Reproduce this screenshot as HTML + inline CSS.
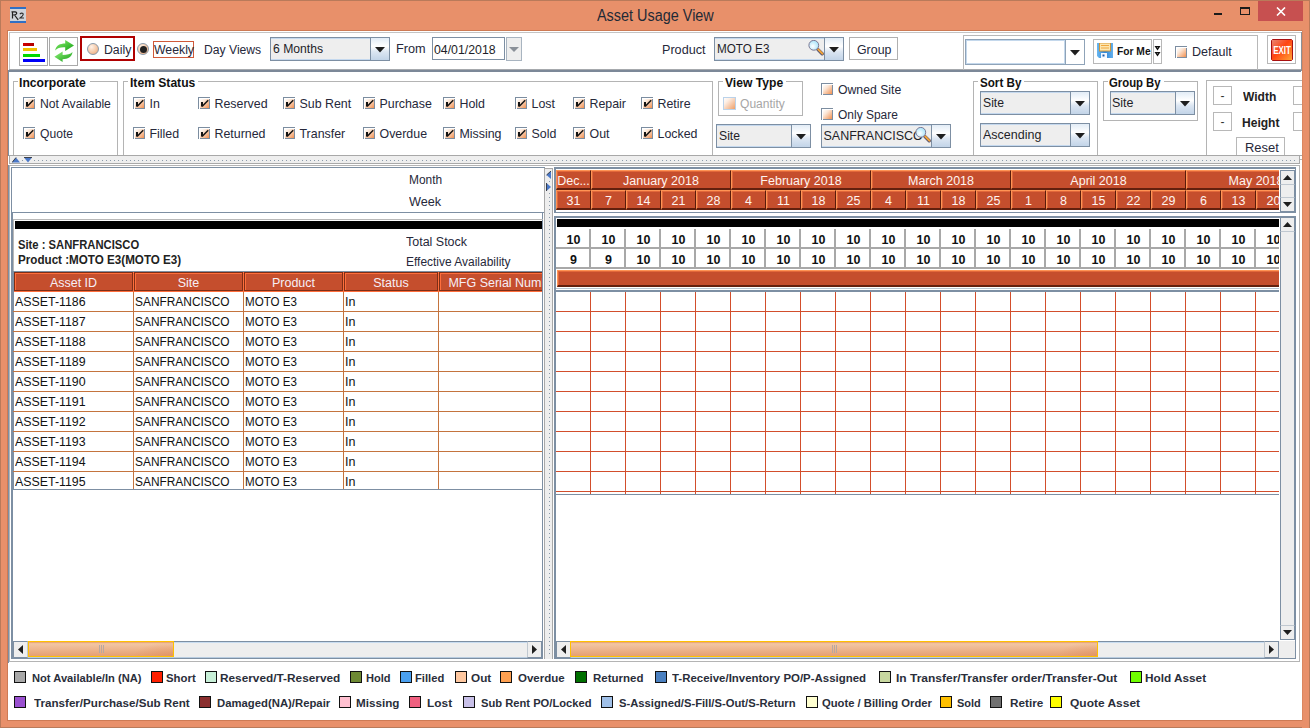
<!DOCTYPE html>
<html><head><meta charset="utf-8"><title>Asset Usage View</title>
<style>
html,body{margin:0;padding:0;}
body{width:1310px;height:728px;position:relative;overflow:hidden;font-family:"Liberation Sans",sans-serif;background:#E8906A;}
body div, body svg{position:absolute;}
</style></head><body>
<div style="left:0px;top:0px;width:1310px;height:728px;background:#E8906A"></div>
<div style="left:0px;top:0px;width:1310px;height:1px;background:#B97A5A"></div>
<div style="left:0px;top:0px;width:1px;height:728px;background:#B97A5A"></div>
<div style="left:1309px;top:0px;width:1px;height:728px;background:#B97A5A"></div>
<div style="left:0px;top:727px;width:1310px;height:1px;background:#B97A5A"></div>
<svg style="left:10px;top:7px" width="16" height="16" viewBox="0 0 16 16"><rect x="0" y="0" width="16" height="16" fill="#CFD3D9"/><rect x="0" y="0" width="16" height="2" fill="#2F6FC4"/><rect x="0" y="14" width="16" height="2" fill="#2F6FC4"/><path d="M2.5 4.5 L2.5 11.5 M1.5 4.8 L5 4.8 Q7 5 6.6 6.8 Q6 8 3 8 M4.5 8 L8.2 12.8" stroke="#202020" stroke-width="1.2" fill="none"/><path d="M9.8 7 Q11.5 5.6 13 6.5 Q13.8 7.6 12.2 9.2 L10 11 L14 11" stroke="#303030" stroke-width="1.1" fill="none"/></svg>
<div style="left:596.80px;top:7.89px;font-size:15.6px;line-height:15.6px;font-weight:normal;color:#1F2A36;white-space:nowrap;transform:scaleX(0.9250);transform-origin:0 0;">Asset Usage View</div>
<div style="left:1214px;top:13px;width:8px;height:2px;background:#1B1B1B"></div>
<div style="left:1240px;top:7px;width:10px;height:8px;border:1px solid #1B1B1B;border-top-width:2px;box-sizing:border-box"></div>
<div style="left:1258px;top:1px;width:45px;height:20px;background:#C75050"></div>
<svg style="left:1276px;top:7px" width="10" height="9" viewBox="0 0 10 9"><path d="M1 0.5 L9 8.5 M9 0.5 L1 8.5" stroke="#fff" stroke-width="1.6"/></svg>
<div style="left:7px;top:30px;width:1296px;height:691px;background:#CD7A54"></div>
<div style="left:8px;top:31px;width:1294px;height:689px;background:#fff"></div>
<div style="left:9px;top:32px;width:1293px;height:1px;background:#C4C4C4"></div>
<div style="left:9px;top:32px;width:1px;height:38px;background:#C4C4C4"></div>
<div style="left:8px;top:70px;width:1px;height:86px;background:#7D8FA3"></div>
<div style="left:8px;top:165px;width:1px;height:498px;background:#7D8FA3"></div>
<div style="left:9px;top:69px;width:1293px;height:1px;background:#A6A9AD"></div>
<div style="left:9px;top:70px;width:1292px;height:2px;background:#7C8898"></div>
<div style="left:1301px;top:32px;width:1px;height:39px;background:#8A9098"></div>
<div style="left:19px;top:37px;width:29px;height:29px;border:1px solid #A9A9A9;box-sizing:border-box;background:#fff"></div>
<div style="left:23px;top:43px;width:11px;height:3px;background:linear-gradient(90deg,#D00000,#B00000)"></div>
<div style="left:23px;top:48px;width:14px;height:3px;background:#F0C000"></div>
<div style="left:23px;top:54px;width:17px;height:3px;background:#00D800"></div>
<div style="left:23px;top:59px;width:22px;height:3px;background:#0000F8"></div>
<div style="left:49px;top:37px;width:29px;height:29px;border:1px solid #A9A9A9;box-sizing:border-box;background:#fff"></div>
<svg style="left:48px;top:36px" width="32" height="32" viewBox="0 0 32 32"><defs><linearGradient id="gA" x1="0" y1="0" x2="1" y2="1"><stop offset="0" stop-color="#8CF070"/><stop offset="1" stop-color="#12A012"/></linearGradient><linearGradient id="gB" x1="0" y1="0" x2="1" y2="1"><stop offset="0" stop-color="#90F27A"/><stop offset="1" stop-color="#129A12"/></linearGradient></defs><path d="M7.2 14.6 C8 9.5 12 7.6 17.2 7.6 L17.2 4 L26 9.5 L17.2 15 L17.2 11.3 C12.5 11 9.5 12 7.2 14.6 Z" fill="url(#gA)"/><path d="M24.5 16 C24 21 19.5 23.2 14.6 23.2 L14.6 26 L6.4 20.7 L14.6 15.4 L14.6 19 C19 19 22.5 18.2 24.5 16 Z" fill="url(#gB)"/></svg>
<div style="left:80px;top:36px;width:55px;height:25px;border:2px solid #B00000;box-sizing:border-box"></div>
<div style="left:87px;top:43px;width:12px;height:12px;border-radius:50%;box-sizing:border-box;border:1px solid #8A9AAA;background:radial-gradient(circle at 35% 30%, #FFF2E8 0%, #F4C4A0 60%, #E89A6A 100%)"></div>
<div style="left:103.80px;top:43.92px;font-size:12.5px;line-height:12.5px;font-weight:normal;color:#26283A;white-space:nowrap;transform:scaleX(0.9821);transform-origin:0 0;">Daily</div>
<div style="left:137px;top:43px;width:12px;height:12px;border-radius:50%;box-sizing:border-box;border:1px solid #8A9AAA;background:radial-gradient(circle at 35% 30%, #FFF2E8 0%, #F4C4A0 60%, #E89A6A 100%)"></div>
<div style="left:139.5px;top:45.5px;width:7px;height:7px;border-radius:50%;background:#222"></div>
<div style="left:153px;top:41px;width:41px;height:17px;border:1px solid #D05A3A;box-sizing:border-box"></div>
<div style="left:153.60px;top:43.92px;font-size:12.5px;line-height:12.5px;font-weight:normal;color:#26283A;white-space:nowrap;transform:scaleX(0.9812);transform-origin:0 0;">Weekly</div>
<div style="left:204.40px;top:43.92px;font-size:12.5px;line-height:12.5px;font-weight:normal;color:#26283A;white-space:nowrap;transform:scaleX(0.9723);transform-origin:0 0;">Day Views</div>
<div style="left:270px;top:37px;width:120px;height:24px;background:#EEEEEE;border:1px solid #7D8FA3;box-sizing:border-box"></div>
<div style="left:271px;top:38px;width:99px;height:1px;background:#C4D8EE"></div>
<div style="left:271px;top:59px;width:99px;height:1px;background:#C4D8EE"></div>
<div style="left:370px;top:37px;width:20px;height:24px;background:linear-gradient(#E2ECF6 0%,#FFFFFF 38%,#DCE6F2 62%,#C2D4E8 100%);border:1px solid #7D8FA3;box-sizing:border-box"></div>
<svg style="left:375.0px;top:47.0px" width="10" height="6" viewBox="0 0 10 6"><path d="M0 0 L10 0 L5 5.5 Z" fill="#1E1E1E"/></svg>
<div style="left:272.60px;top:43.42px;font-size:12.5px;line-height:12.5px;font-weight:normal;color:#1E1E28;white-space:nowrap;transform:scaleX(0.9723);transform-origin:0 0;">6 Months</div>
<div style="left:395.60px;top:42.92px;font-size:12.5px;line-height:12.5px;font-weight:normal;color:#26283A;white-space:nowrap;transform:scaleX(1.0147);transform-origin:0 0;">From</div>
<div style="left:432px;top:37px;width:73px;height:23px;background:#fff;border:1px solid #7D8FA3;box-sizing:border-box"></div>
<div style="left:434.10px;top:43.52px;font-size:12.5px;line-height:12.5px;font-weight:normal;color:#1E1E28;white-space:nowrap;transform:scaleX(0.9846);transform-origin:0 0;">04/01/2018</div>
<div style="left:506px;top:37px;width:16px;height:24px;background:#EEEEEE;border:1px solid #A8B4C0;box-sizing:border-box"></div>
<svg style="left:509px;top:47px" width="10" height="5" viewBox="0 0 10 5"><path d="M0 0 L10 0 L5 5 Z" fill="#8A9098"/></svg>
<div style="left:662.30px;top:43.92px;font-size:12.5px;line-height:12.5px;font-weight:normal;color:#26283A;white-space:nowrap;transform:scaleX(1.0094);transform-origin:0 0;">Product</div>
<div style="left:714px;top:37px;width:130px;height:24px;background:#EEEEEE;border:1px solid #7D8FA3;box-sizing:border-box"></div>
<div style="left:715px;top:38px;width:109px;height:1px;background:#C4D8EE"></div>
<div style="left:715px;top:59px;width:109px;height:1px;background:#C4D8EE"></div>
<div style="left:824px;top:37px;width:20px;height:24px;background:linear-gradient(#E2ECF6 0%,#FFFFFF 38%,#DCE6F2 62%,#C2D4E8 100%);border:1px solid #7D8FA3;box-sizing:border-box"></div>
<svg style="left:829.0px;top:47.0px" width="10" height="6" viewBox="0 0 10 6"><path d="M0 0 L10 0 L5 5.5 Z" fill="#1E1E1E"/></svg>
<div style="left:716.90px;top:43.42px;font-size:12.5px;line-height:12.5px;font-weight:normal;color:#1E1E28;white-space:nowrap;transform:scaleX(0.9352);transform-origin:0 0;">MOTO E3</div>
<svg style="left:807px;top:40px" width="17" height="17" viewBox="0 0 17 17"><defs><radialGradient id="mg" cx="0.4" cy="0.6" r="0.6"><stop offset="0" stop-color="#FFFFFF"/><stop offset="1" stop-color="#A8E4FA"/></radialGradient></defs><path d="M11 9.6 L15.2 13.8" stroke="#5A5670" stroke-width="3.4" stroke-linecap="round"/><path d="M11.2 9.4 L15.4 13.6" stroke="#F5A435" stroke-width="2" stroke-linecap="round"/><circle cx="6.8" cy="5.3" r="4.9" fill="url(#mg)" stroke="#7C7894" stroke-width="1"/></svg>
<div style="left:849px;top:37px;width:49px;height:23px;background:#fff;border:1px solid #B0B0B0;box-sizing:border-box"></div>
<div style="left:856.70px;top:43.92px;font-size:12.5px;line-height:12.5px;font-weight:normal;color:#26283A;white-space:nowrap;transform:scaleX(0.9899);transform-origin:0 0;">Group</div>
<div style="left:963px;top:35px;width:295px;height:35px;border:1px solid #B8B8B8;border-bottom:none;box-sizing:border-box"></div>
<div style="left:965px;top:39px;width:120px;height:26px;background:#fff;border:1px solid #8FA3B8;box-sizing:border-box"></div>
<div style="left:1065px;top:39px;width:20px;height:26px;background:#fff;border:1px solid #8FA3B8;box-sizing:border-box"></div>
<svg style="left:1070.0px;top:50.0px" width="10" height="6" viewBox="0 0 10 6"><path d="M0 0 L10 0 L5 5.5 Z" fill="#1E1E1E"/></svg>
<div style="left:966px;top:40px;width:99px;height:24px;border:1px solid #C4D8EC;box-sizing:border-box"></div>
<div style="left:1093px;top:39px;width:59px;height:25px;background:#fff;border:1px solid #B8B8B8;box-sizing:border-box"></div>
<svg style="left:1097px;top:43px" width="16" height="15" viewBox="0 0 16 15"><defs><linearGradient id="fl" x1="0" y1="0" x2="1" y2="0"><stop offset="0" stop-color="#6AB8F0"/><stop offset="0.5" stop-color="#2F86D8"/><stop offset="1" stop-color="#64B0EC"/></linearGradient></defs><path d="M0 0 L16 0 L16 15 L2 15 L0 13 Z" fill="url(#fl)"/><rect x="2.5" y="0" width="11" height="8" fill="#FCE6B0" stroke="#D0902E" stroke-width="0.9"/><rect x="4" y="2" width="8" height="1" fill="#F0A840"/><rect x="4" y="4.5" width="8" height="1" fill="#F0A840"/><rect x="4" y="10" width="6" height="5" fill="#F4F8FF"/><rect x="5.5" y="11.5" width="2" height="2" fill="#1A5AA8"/></svg>
<div style="left:1116.70px;top:45.86px;font-size:10.8px;line-height:10.8px;font-weight:bold;color:#141414;white-space:nowrap;transform:scaleX(0.9494);transform-origin:0 0;">For Me</div>
<div style="left:1153px;top:39px;width:9px;height:25px;background:#fff;border:1px solid #B8B8B8;box-sizing:border-box"></div>
<svg style="left:1154px;top:45px" width="7" height="12" viewBox="0 0 7 12"><path d="M0.5 1 L6.5 1 L3.5 5.6 Z M0.5 7 L6.5 7 L3.5 11.6 Z" fill="#111"/><circle cx="3.5" cy="2.4" r="0.45" fill="#fff"/><circle cx="3.5" cy="8.4" r="0.45" fill="#fff"/></svg>
<svg style="left:1175px;top:46px" width="12" height="12" viewBox="0 0 12 12"><defs><linearGradient id="cbg" x1="0" y1="0" x2="1" y2="1"><stop offset="0" stop-color="#FFFFFF"/><stop offset="0.35" stop-color="#FBE6D6"/><stop offset="1" stop-color="#F29050"/></linearGradient></defs><rect x="0" y="0" width="12" height="1" fill="#7C8DA0"/><rect x="0" y="0" width="1" height="12" fill="#7C8DA0"/><rect x="1" y="1" width="11" height="1" fill="#FFFFFF"/><rect x="1" y="1" width="1" height="11" fill="#FFFFFF"/><rect x="2" y="2" width="9" height="9" fill="url(#cbg)"/><rect x="11" y="2" width="1" height="10" fill="#7C8DA0"/><rect x="2" y="11" width="10" height="1" fill="#7C8DA0"/></svg>
<div style="left:1191.80px;top:46.42px;font-size:12.5px;line-height:12.5px;font-weight:normal;color:#26283A;white-space:nowrap;transform:scaleX(1.0048);transform-origin:0 0;">Default</div>
<div style="left:1267px;top:35px;width:29px;height:29px;border:1px solid #B8B8B8;box-sizing:border-box"></div>
<svg style="left:1271px;top:39px" width="22" height="22" viewBox="0 0 22 22"><defs><linearGradient id="ex" x1="0" y1="0" x2="1" y2="1"><stop offset="0" stop-color="#E88878"/><stop offset="0.45" stop-color="#FF4412"/><stop offset="1" stop-color="#FFA838"/></linearGradient></defs><path d="M1.5 0.5 L20.5 0.5 L21.5 1.5 L21.5 20.5 L20.5 21.5 L1.5 21.5 L0.5 20.5 L0.5 1.5 Z" fill="url(#ex)" stroke="#A81010" stroke-width="1"/></svg>
<div style="left:1271px;top:45.5px;width:22px;font-size:10px;line-height:10px;font-weight:bold;color:#fff;text-align:center;white-space:nowrap;transform:scaleX(0.8);transform-origin:11px 0">EXIT</div>
<div style="left:9px;top:155px;width:1293px;height:1px;background:#A8A8A8"></div>
<div style="left:13px;top:81px;width:105px;height:80px;border:1px solid #B4B4B4;box-sizing:border-box"></div>
<div style="left:18px;top:75px;width:71.69999999999999px;height:10px;background:#fff"></div>
<div style="left:19.30px;top:77.09px;font-size:12.3px;line-height:12.3px;font-weight:bold;color:#111;white-space:nowrap;transform:scaleX(0.9888);transform-origin:0 0;">Incorporate</div>
<svg style="left:23px;top:97px" width="12" height="12" viewBox="0 0 12 12"><defs><linearGradient id="cbg" x1="0" y1="0" x2="1" y2="1"><stop offset="0" stop-color="#FFFFFF"/><stop offset="0.35" stop-color="#FBE6D6"/><stop offset="1" stop-color="#F29050"/></linearGradient></defs><rect x="0" y="0" width="12" height="1" fill="#7C8DA0"/><rect x="0" y="0" width="1" height="12" fill="#7C8DA0"/><rect x="1" y="1" width="11" height="1" fill="#FFFFFF"/><rect x="1" y="1" width="1" height="11" fill="#FFFFFF"/><rect x="2" y="2" width="9" height="9" fill="url(#cbg)"/><rect x="11" y="2" width="1" height="10" fill="#7C8DA0"/><rect x="2" y="11" width="10" height="1" fill="#7C8DA0"/><rect x="3" y="5" width="2" height="4.6" fill="#141414"/><path d="M4.3 9.3 L10.2 3.2" stroke="#141414" stroke-width="1.5"/></svg>
<div style="left:39.80px;top:97.92px;font-size:12.5px;line-height:12.5px;font-weight:normal;color:#26283A;white-space:nowrap;transform:scaleX(0.9746);transform-origin:0 0;">Not Available</div>
<svg style="left:23px;top:127px" width="12" height="12" viewBox="0 0 12 12"><defs><linearGradient id="cbg" x1="0" y1="0" x2="1" y2="1"><stop offset="0" stop-color="#FFFFFF"/><stop offset="0.35" stop-color="#FBE6D6"/><stop offset="1" stop-color="#F29050"/></linearGradient></defs><rect x="0" y="0" width="12" height="1" fill="#7C8DA0"/><rect x="0" y="0" width="1" height="12" fill="#7C8DA0"/><rect x="1" y="1" width="11" height="1" fill="#FFFFFF"/><rect x="1" y="1" width="1" height="11" fill="#FFFFFF"/><rect x="2" y="2" width="9" height="9" fill="url(#cbg)"/><rect x="11" y="2" width="1" height="10" fill="#7C8DA0"/><rect x="2" y="11" width="10" height="1" fill="#7C8DA0"/><rect x="3" y="5" width="2" height="4.6" fill="#141414"/><path d="M4.3 9.3 L10.2 3.2" stroke="#141414" stroke-width="1.5"/></svg>
<div style="left:39.80px;top:127.92px;font-size:12.5px;line-height:12.5px;font-weight:normal;color:#26283A;white-space:nowrap;transform:scaleX(0.9688);transform-origin:0 0;">Quote</div>
<div style="left:123px;top:81px;width:590px;height:80px;border:1px solid #B4B4B4;box-sizing:border-box"></div>
<div style="left:128px;top:75px;width:70.1px;height:10px;background:#fff"></div>
<div style="left:129.70px;top:77.09px;font-size:12.3px;line-height:12.3px;font-weight:bold;color:#111;white-space:nowrap;transform:scaleX(0.9850);transform-origin:0 0;">Item Status</div>
<svg style="left:133px;top:97px" width="12" height="12" viewBox="0 0 12 12"><defs><linearGradient id="cbg" x1="0" y1="0" x2="1" y2="1"><stop offset="0" stop-color="#FFFFFF"/><stop offset="0.35" stop-color="#FBE6D6"/><stop offset="1" stop-color="#F29050"/></linearGradient></defs><rect x="0" y="0" width="12" height="1" fill="#7C8DA0"/><rect x="0" y="0" width="1" height="12" fill="#7C8DA0"/><rect x="1" y="1" width="11" height="1" fill="#FFFFFF"/><rect x="1" y="1" width="1" height="11" fill="#FFFFFF"/><rect x="2" y="2" width="9" height="9" fill="url(#cbg)"/><rect x="11" y="2" width="1" height="10" fill="#7C8DA0"/><rect x="2" y="11" width="10" height="1" fill="#7C8DA0"/><rect x="3" y="5" width="2" height="4.6" fill="#141414"/><path d="M4.3 9.3 L10.2 3.2" stroke="#141414" stroke-width="1.5"/></svg>
<div style="left:149.5px;top:98.20px;font-size:12.4px;line-height:12.4px;font-weight:normal;color:#26283A;white-space:nowrap;">In</div>
<svg style="left:133px;top:127px" width="12" height="12" viewBox="0 0 12 12"><defs><linearGradient id="cbg" x1="0" y1="0" x2="1" y2="1"><stop offset="0" stop-color="#FFFFFF"/><stop offset="0.35" stop-color="#FBE6D6"/><stop offset="1" stop-color="#F29050"/></linearGradient></defs><rect x="0" y="0" width="12" height="1" fill="#7C8DA0"/><rect x="0" y="0" width="1" height="12" fill="#7C8DA0"/><rect x="1" y="1" width="11" height="1" fill="#FFFFFF"/><rect x="1" y="1" width="1" height="11" fill="#FFFFFF"/><rect x="2" y="2" width="9" height="9" fill="url(#cbg)"/><rect x="11" y="2" width="1" height="10" fill="#7C8DA0"/><rect x="2" y="11" width="10" height="1" fill="#7C8DA0"/><rect x="3" y="5" width="2" height="4.6" fill="#141414"/><path d="M4.3 9.3 L10.2 3.2" stroke="#141414" stroke-width="1.5"/></svg>
<div style="left:149.5px;top:128.20px;font-size:12.4px;line-height:12.4px;font-weight:normal;color:#26283A;white-space:nowrap;">Filled</div>
<svg style="left:198px;top:97px" width="12" height="12" viewBox="0 0 12 12"><defs><linearGradient id="cbg" x1="0" y1="0" x2="1" y2="1"><stop offset="0" stop-color="#FFFFFF"/><stop offset="0.35" stop-color="#FBE6D6"/><stop offset="1" stop-color="#F29050"/></linearGradient></defs><rect x="0" y="0" width="12" height="1" fill="#7C8DA0"/><rect x="0" y="0" width="1" height="12" fill="#7C8DA0"/><rect x="1" y="1" width="11" height="1" fill="#FFFFFF"/><rect x="1" y="1" width="1" height="11" fill="#FFFFFF"/><rect x="2" y="2" width="9" height="9" fill="url(#cbg)"/><rect x="11" y="2" width="1" height="10" fill="#7C8DA0"/><rect x="2" y="11" width="10" height="1" fill="#7C8DA0"/><rect x="3" y="5" width="2" height="4.6" fill="#141414"/><path d="M4.3 9.3 L10.2 3.2" stroke="#141414" stroke-width="1.5"/></svg>
<div style="left:214.5px;top:98.20px;font-size:12.4px;line-height:12.4px;font-weight:normal;color:#26283A;white-space:nowrap;">Reserved</div>
<svg style="left:198px;top:127px" width="12" height="12" viewBox="0 0 12 12"><defs><linearGradient id="cbg" x1="0" y1="0" x2="1" y2="1"><stop offset="0" stop-color="#FFFFFF"/><stop offset="0.35" stop-color="#FBE6D6"/><stop offset="1" stop-color="#F29050"/></linearGradient></defs><rect x="0" y="0" width="12" height="1" fill="#7C8DA0"/><rect x="0" y="0" width="1" height="12" fill="#7C8DA0"/><rect x="1" y="1" width="11" height="1" fill="#FFFFFF"/><rect x="1" y="1" width="1" height="11" fill="#FFFFFF"/><rect x="2" y="2" width="9" height="9" fill="url(#cbg)"/><rect x="11" y="2" width="1" height="10" fill="#7C8DA0"/><rect x="2" y="11" width="10" height="1" fill="#7C8DA0"/><rect x="3" y="5" width="2" height="4.6" fill="#141414"/><path d="M4.3 9.3 L10.2 3.2" stroke="#141414" stroke-width="1.5"/></svg>
<div style="left:214.5px;top:128.20px;font-size:12.4px;line-height:12.4px;font-weight:normal;color:#26283A;white-space:nowrap;">Returned</div>
<svg style="left:283px;top:97px" width="12" height="12" viewBox="0 0 12 12"><defs><linearGradient id="cbg" x1="0" y1="0" x2="1" y2="1"><stop offset="0" stop-color="#FFFFFF"/><stop offset="0.35" stop-color="#FBE6D6"/><stop offset="1" stop-color="#F29050"/></linearGradient></defs><rect x="0" y="0" width="12" height="1" fill="#7C8DA0"/><rect x="0" y="0" width="1" height="12" fill="#7C8DA0"/><rect x="1" y="1" width="11" height="1" fill="#FFFFFF"/><rect x="1" y="1" width="1" height="11" fill="#FFFFFF"/><rect x="2" y="2" width="9" height="9" fill="url(#cbg)"/><rect x="11" y="2" width="1" height="10" fill="#7C8DA0"/><rect x="2" y="11" width="10" height="1" fill="#7C8DA0"/><rect x="3" y="5" width="2" height="4.6" fill="#141414"/><path d="M4.3 9.3 L10.2 3.2" stroke="#141414" stroke-width="1.5"/></svg>
<div style="left:299.5px;top:98.20px;font-size:12.4px;line-height:12.4px;font-weight:normal;color:#26283A;white-space:nowrap;">Sub Rent</div>
<svg style="left:283px;top:127px" width="12" height="12" viewBox="0 0 12 12"><defs><linearGradient id="cbg" x1="0" y1="0" x2="1" y2="1"><stop offset="0" stop-color="#FFFFFF"/><stop offset="0.35" stop-color="#FBE6D6"/><stop offset="1" stop-color="#F29050"/></linearGradient></defs><rect x="0" y="0" width="12" height="1" fill="#7C8DA0"/><rect x="0" y="0" width="1" height="12" fill="#7C8DA0"/><rect x="1" y="1" width="11" height="1" fill="#FFFFFF"/><rect x="1" y="1" width="1" height="11" fill="#FFFFFF"/><rect x="2" y="2" width="9" height="9" fill="url(#cbg)"/><rect x="11" y="2" width="1" height="10" fill="#7C8DA0"/><rect x="2" y="11" width="10" height="1" fill="#7C8DA0"/><rect x="3" y="5" width="2" height="4.6" fill="#141414"/><path d="M4.3 9.3 L10.2 3.2" stroke="#141414" stroke-width="1.5"/></svg>
<div style="left:299.5px;top:128.20px;font-size:12.4px;line-height:12.4px;font-weight:normal;color:#26283A;white-space:nowrap;">Transfer</div>
<svg style="left:363px;top:97px" width="12" height="12" viewBox="0 0 12 12"><defs><linearGradient id="cbg" x1="0" y1="0" x2="1" y2="1"><stop offset="0" stop-color="#FFFFFF"/><stop offset="0.35" stop-color="#FBE6D6"/><stop offset="1" stop-color="#F29050"/></linearGradient></defs><rect x="0" y="0" width="12" height="1" fill="#7C8DA0"/><rect x="0" y="0" width="1" height="12" fill="#7C8DA0"/><rect x="1" y="1" width="11" height="1" fill="#FFFFFF"/><rect x="1" y="1" width="1" height="11" fill="#FFFFFF"/><rect x="2" y="2" width="9" height="9" fill="url(#cbg)"/><rect x="11" y="2" width="1" height="10" fill="#7C8DA0"/><rect x="2" y="11" width="10" height="1" fill="#7C8DA0"/><rect x="3" y="5" width="2" height="4.6" fill="#141414"/><path d="M4.3 9.3 L10.2 3.2" stroke="#141414" stroke-width="1.5"/></svg>
<div style="left:379.5px;top:98.20px;font-size:12.4px;line-height:12.4px;font-weight:normal;color:#26283A;white-space:nowrap;">Purchase</div>
<svg style="left:363px;top:127px" width="12" height="12" viewBox="0 0 12 12"><defs><linearGradient id="cbg" x1="0" y1="0" x2="1" y2="1"><stop offset="0" stop-color="#FFFFFF"/><stop offset="0.35" stop-color="#FBE6D6"/><stop offset="1" stop-color="#F29050"/></linearGradient></defs><rect x="0" y="0" width="12" height="1" fill="#7C8DA0"/><rect x="0" y="0" width="1" height="12" fill="#7C8DA0"/><rect x="1" y="1" width="11" height="1" fill="#FFFFFF"/><rect x="1" y="1" width="1" height="11" fill="#FFFFFF"/><rect x="2" y="2" width="9" height="9" fill="url(#cbg)"/><rect x="11" y="2" width="1" height="10" fill="#7C8DA0"/><rect x="2" y="11" width="10" height="1" fill="#7C8DA0"/><rect x="3" y="5" width="2" height="4.6" fill="#141414"/><path d="M4.3 9.3 L10.2 3.2" stroke="#141414" stroke-width="1.5"/></svg>
<div style="left:379.5px;top:128.20px;font-size:12.4px;line-height:12.4px;font-weight:normal;color:#26283A;white-space:nowrap;">Overdue</div>
<svg style="left:443px;top:97px" width="12" height="12" viewBox="0 0 12 12"><defs><linearGradient id="cbg" x1="0" y1="0" x2="1" y2="1"><stop offset="0" stop-color="#FFFFFF"/><stop offset="0.35" stop-color="#FBE6D6"/><stop offset="1" stop-color="#F29050"/></linearGradient></defs><rect x="0" y="0" width="12" height="1" fill="#7C8DA0"/><rect x="0" y="0" width="1" height="12" fill="#7C8DA0"/><rect x="1" y="1" width="11" height="1" fill="#FFFFFF"/><rect x="1" y="1" width="1" height="11" fill="#FFFFFF"/><rect x="2" y="2" width="9" height="9" fill="url(#cbg)"/><rect x="11" y="2" width="1" height="10" fill="#7C8DA0"/><rect x="2" y="11" width="10" height="1" fill="#7C8DA0"/><rect x="3" y="5" width="2" height="4.6" fill="#141414"/><path d="M4.3 9.3 L10.2 3.2" stroke="#141414" stroke-width="1.5"/></svg>
<div style="left:459.5px;top:98.20px;font-size:12.4px;line-height:12.4px;font-weight:normal;color:#26283A;white-space:nowrap;">Hold</div>
<svg style="left:443px;top:127px" width="12" height="12" viewBox="0 0 12 12"><defs><linearGradient id="cbg" x1="0" y1="0" x2="1" y2="1"><stop offset="0" stop-color="#FFFFFF"/><stop offset="0.35" stop-color="#FBE6D6"/><stop offset="1" stop-color="#F29050"/></linearGradient></defs><rect x="0" y="0" width="12" height="1" fill="#7C8DA0"/><rect x="0" y="0" width="1" height="12" fill="#7C8DA0"/><rect x="1" y="1" width="11" height="1" fill="#FFFFFF"/><rect x="1" y="1" width="1" height="11" fill="#FFFFFF"/><rect x="2" y="2" width="9" height="9" fill="url(#cbg)"/><rect x="11" y="2" width="1" height="10" fill="#7C8DA0"/><rect x="2" y="11" width="10" height="1" fill="#7C8DA0"/><rect x="3" y="5" width="2" height="4.6" fill="#141414"/><path d="M4.3 9.3 L10.2 3.2" stroke="#141414" stroke-width="1.5"/></svg>
<div style="left:459.5px;top:128.20px;font-size:12.4px;line-height:12.4px;font-weight:normal;color:#26283A;white-space:nowrap;">Missing</div>
<svg style="left:515px;top:97px" width="12" height="12" viewBox="0 0 12 12"><defs><linearGradient id="cbg" x1="0" y1="0" x2="1" y2="1"><stop offset="0" stop-color="#FFFFFF"/><stop offset="0.35" stop-color="#FBE6D6"/><stop offset="1" stop-color="#F29050"/></linearGradient></defs><rect x="0" y="0" width="12" height="1" fill="#7C8DA0"/><rect x="0" y="0" width="1" height="12" fill="#7C8DA0"/><rect x="1" y="1" width="11" height="1" fill="#FFFFFF"/><rect x="1" y="1" width="1" height="11" fill="#FFFFFF"/><rect x="2" y="2" width="9" height="9" fill="url(#cbg)"/><rect x="11" y="2" width="1" height="10" fill="#7C8DA0"/><rect x="2" y="11" width="10" height="1" fill="#7C8DA0"/><rect x="3" y="5" width="2" height="4.6" fill="#141414"/><path d="M4.3 9.3 L10.2 3.2" stroke="#141414" stroke-width="1.5"/></svg>
<div style="left:531.5px;top:98.20px;font-size:12.4px;line-height:12.4px;font-weight:normal;color:#26283A;white-space:nowrap;">Lost</div>
<svg style="left:515px;top:127px" width="12" height="12" viewBox="0 0 12 12"><defs><linearGradient id="cbg" x1="0" y1="0" x2="1" y2="1"><stop offset="0" stop-color="#FFFFFF"/><stop offset="0.35" stop-color="#FBE6D6"/><stop offset="1" stop-color="#F29050"/></linearGradient></defs><rect x="0" y="0" width="12" height="1" fill="#7C8DA0"/><rect x="0" y="0" width="1" height="12" fill="#7C8DA0"/><rect x="1" y="1" width="11" height="1" fill="#FFFFFF"/><rect x="1" y="1" width="1" height="11" fill="#FFFFFF"/><rect x="2" y="2" width="9" height="9" fill="url(#cbg)"/><rect x="11" y="2" width="1" height="10" fill="#7C8DA0"/><rect x="2" y="11" width="10" height="1" fill="#7C8DA0"/><rect x="3" y="5" width="2" height="4.6" fill="#141414"/><path d="M4.3 9.3 L10.2 3.2" stroke="#141414" stroke-width="1.5"/></svg>
<div style="left:531.5px;top:128.20px;font-size:12.4px;line-height:12.4px;font-weight:normal;color:#26283A;white-space:nowrap;">Sold</div>
<svg style="left:573px;top:97px" width="12" height="12" viewBox="0 0 12 12"><defs><linearGradient id="cbg" x1="0" y1="0" x2="1" y2="1"><stop offset="0" stop-color="#FFFFFF"/><stop offset="0.35" stop-color="#FBE6D6"/><stop offset="1" stop-color="#F29050"/></linearGradient></defs><rect x="0" y="0" width="12" height="1" fill="#7C8DA0"/><rect x="0" y="0" width="1" height="12" fill="#7C8DA0"/><rect x="1" y="1" width="11" height="1" fill="#FFFFFF"/><rect x="1" y="1" width="1" height="11" fill="#FFFFFF"/><rect x="2" y="2" width="9" height="9" fill="url(#cbg)"/><rect x="11" y="2" width="1" height="10" fill="#7C8DA0"/><rect x="2" y="11" width="10" height="1" fill="#7C8DA0"/><rect x="3" y="5" width="2" height="4.6" fill="#141414"/><path d="M4.3 9.3 L10.2 3.2" stroke="#141414" stroke-width="1.5"/></svg>
<div style="left:589.5px;top:98.20px;font-size:12.4px;line-height:12.4px;font-weight:normal;color:#26283A;white-space:nowrap;">Repair</div>
<svg style="left:573px;top:127px" width="12" height="12" viewBox="0 0 12 12"><defs><linearGradient id="cbg" x1="0" y1="0" x2="1" y2="1"><stop offset="0" stop-color="#FFFFFF"/><stop offset="0.35" stop-color="#FBE6D6"/><stop offset="1" stop-color="#F29050"/></linearGradient></defs><rect x="0" y="0" width="12" height="1" fill="#7C8DA0"/><rect x="0" y="0" width="1" height="12" fill="#7C8DA0"/><rect x="1" y="1" width="11" height="1" fill="#FFFFFF"/><rect x="1" y="1" width="1" height="11" fill="#FFFFFF"/><rect x="2" y="2" width="9" height="9" fill="url(#cbg)"/><rect x="11" y="2" width="1" height="10" fill="#7C8DA0"/><rect x="2" y="11" width="10" height="1" fill="#7C8DA0"/><rect x="3" y="5" width="2" height="4.6" fill="#141414"/><path d="M4.3 9.3 L10.2 3.2" stroke="#141414" stroke-width="1.5"/></svg>
<div style="left:589.5px;top:128.20px;font-size:12.4px;line-height:12.4px;font-weight:normal;color:#26283A;white-space:nowrap;">Out</div>
<svg style="left:641px;top:97px" width="12" height="12" viewBox="0 0 12 12"><defs><linearGradient id="cbg" x1="0" y1="0" x2="1" y2="1"><stop offset="0" stop-color="#FFFFFF"/><stop offset="0.35" stop-color="#FBE6D6"/><stop offset="1" stop-color="#F29050"/></linearGradient></defs><rect x="0" y="0" width="12" height="1" fill="#7C8DA0"/><rect x="0" y="0" width="1" height="12" fill="#7C8DA0"/><rect x="1" y="1" width="11" height="1" fill="#FFFFFF"/><rect x="1" y="1" width="1" height="11" fill="#FFFFFF"/><rect x="2" y="2" width="9" height="9" fill="url(#cbg)"/><rect x="11" y="2" width="1" height="10" fill="#7C8DA0"/><rect x="2" y="11" width="10" height="1" fill="#7C8DA0"/><rect x="3" y="5" width="2" height="4.6" fill="#141414"/><path d="M4.3 9.3 L10.2 3.2" stroke="#141414" stroke-width="1.5"/></svg>
<div style="left:657.5px;top:98.20px;font-size:12.4px;line-height:12.4px;font-weight:normal;color:#26283A;white-space:nowrap;">Retire</div>
<svg style="left:641px;top:127px" width="12" height="12" viewBox="0 0 12 12"><defs><linearGradient id="cbg" x1="0" y1="0" x2="1" y2="1"><stop offset="0" stop-color="#FFFFFF"/><stop offset="0.35" stop-color="#FBE6D6"/><stop offset="1" stop-color="#F29050"/></linearGradient></defs><rect x="0" y="0" width="12" height="1" fill="#7C8DA0"/><rect x="0" y="0" width="1" height="12" fill="#7C8DA0"/><rect x="1" y="1" width="11" height="1" fill="#FFFFFF"/><rect x="1" y="1" width="1" height="11" fill="#FFFFFF"/><rect x="2" y="2" width="9" height="9" fill="url(#cbg)"/><rect x="11" y="2" width="1" height="10" fill="#7C8DA0"/><rect x="2" y="11" width="10" height="1" fill="#7C8DA0"/><rect x="3" y="5" width="2" height="4.6" fill="#141414"/><path d="M4.3 9.3 L10.2 3.2" stroke="#141414" stroke-width="1.5"/></svg>
<div style="left:657.5px;top:128.20px;font-size:12.4px;line-height:12.4px;font-weight:normal;color:#26283A;white-space:nowrap;">Locked</div>
<div style="left:718px;top:81px;width:85px;height:35px;border:1px solid #B4B4B4;box-sizing:border-box"></div>
<div style="left:723px;top:75px;width:63.0px;height:10px;background:#fff"></div>
<div style="left:724.80px;top:77.09px;font-size:12.3px;line-height:12.3px;font-weight:bold;color:#111;white-space:nowrap;transform:scaleX(0.9862);transform-origin:0 0;">View Type</div>
<svg style="left:723px;top:97px" width="13" height="13" viewBox="0 0 13 13"><defs><linearGradient id="cbd" x1="0" y1="0" x2="1" y2="1"><stop offset="0" stop-color="#FFFFFF"/><stop offset="0.3" stop-color="#FDEEE4"/><stop offset="1" stop-color="#EE9A60"/></linearGradient></defs><rect x="0.5" y="0.5" width="12" height="12" fill="url(#cbd)" stroke="#BAD2EA" stroke-width="1"/></svg>
<div style="left:739.70px;top:98.42px;font-size:12.5px;line-height:12.5px;font-weight:normal;color:#A6A6A6;white-space:nowrap;transform:scaleX(0.9643);transform-origin:0 0;">Quantity</div>
<div style="left:716px;top:124px;width:95px;height:24px;background:#EEEEEE;border:1px solid #7D8FA3;box-sizing:border-box"></div>
<div style="left:717px;top:125px;width:74px;height:1px;background:#C4D8EE"></div>
<div style="left:717px;top:146px;width:74px;height:1px;background:#C4D8EE"></div>
<div style="left:791px;top:124px;width:20px;height:24px;background:linear-gradient(#E2ECF6 0%,#FFFFFF 38%,#DCE6F2 62%,#C2D4E8 100%);border:1px solid #7D8FA3;box-sizing:border-box"></div>
<svg style="left:796.0px;top:134.0px" width="10" height="6" viewBox="0 0 10 6"><path d="M0 0 L10 0 L5 5.5 Z" fill="#1E1E1E"/></svg>
<div style="left:718.70px;top:130.42px;font-size:12.5px;line-height:12.5px;font-weight:normal;color:#1E1E28;white-space:nowrap;transform:scaleX(0.9746);transform-origin:0 0;">Site</div>
<svg style="left:821px;top:83px" width="12" height="12" viewBox="0 0 12 12"><defs><linearGradient id="cbg" x1="0" y1="0" x2="1" y2="1"><stop offset="0" stop-color="#FFFFFF"/><stop offset="0.35" stop-color="#FBE6D6"/><stop offset="1" stop-color="#F29050"/></linearGradient></defs><rect x="0" y="0" width="12" height="1" fill="#7C8DA0"/><rect x="0" y="0" width="1" height="12" fill="#7C8DA0"/><rect x="1" y="1" width="11" height="1" fill="#FFFFFF"/><rect x="1" y="1" width="1" height="11" fill="#FFFFFF"/><rect x="2" y="2" width="9" height="9" fill="url(#cbg)"/><rect x="11" y="2" width="1" height="10" fill="#7C8DA0"/><rect x="2" y="11" width="10" height="1" fill="#7C8DA0"/></svg>
<div style="left:837.70px;top:84.42px;font-size:12.5px;line-height:12.5px;font-weight:normal;color:#26283A;white-space:nowrap;transform:scaleX(0.9795);transform-origin:0 0;">Owned Site</div>
<svg style="left:821px;top:108px" width="12" height="12" viewBox="0 0 12 12"><defs><linearGradient id="cbg" x1="0" y1="0" x2="1" y2="1"><stop offset="0" stop-color="#FFFFFF"/><stop offset="0.35" stop-color="#FBE6D6"/><stop offset="1" stop-color="#F29050"/></linearGradient></defs><rect x="0" y="0" width="12" height="1" fill="#7C8DA0"/><rect x="0" y="0" width="1" height="12" fill="#7C8DA0"/><rect x="1" y="1" width="11" height="1" fill="#FFFFFF"/><rect x="1" y="1" width="1" height="11" fill="#FFFFFF"/><rect x="2" y="2" width="9" height="9" fill="url(#cbg)"/><rect x="11" y="2" width="1" height="10" fill="#7C8DA0"/><rect x="2" y="11" width="10" height="1" fill="#7C8DA0"/></svg>
<div style="left:837.70px;top:109.42px;font-size:12.5px;line-height:12.5px;font-weight:normal;color:#26283A;white-space:nowrap;transform:scaleX(0.9579);transform-origin:0 0;">Only Spare</div>
<div style="left:821px;top:124px;width:130px;height:24px;background:#EEEEEE;border:1px solid #7D8FA3;box-sizing:border-box"></div>
<div style="left:822px;top:125px;width:109px;height:1px;background:#C4D8EE"></div>
<div style="left:822px;top:146px;width:109px;height:1px;background:#C4D8EE"></div>
<div style="left:931px;top:124px;width:20px;height:24px;background:linear-gradient(#E2ECF6 0%,#FFFFFF 38%,#DCE6F2 62%,#C2D4E8 100%);border:1px solid #7D8FA3;box-sizing:border-box"></div>
<svg style="left:936.0px;top:134.0px" width="10" height="6" viewBox="0 0 10 6"><path d="M0 0 L10 0 L5 5.5 Z" fill="#1E1E1E"/></svg>
<div style="left:823.5px;top:130.42px;font-size:12.5px;line-height:12.5px;font-weight:normal;color:#1E1E28;white-space:nowrap;">SANFRANCISCO</div>
<svg style="left:914px;top:127px" width="17" height="17" viewBox="0 0 17 17"><defs><radialGradient id="mg" cx="0.4" cy="0.6" r="0.6"><stop offset="0" stop-color="#FFFFFF"/><stop offset="1" stop-color="#A8E4FA"/></radialGradient></defs><path d="M11 9.6 L15.2 13.8" stroke="#5A5670" stroke-width="3.4" stroke-linecap="round"/><path d="M11.2 9.4 L15.4 13.6" stroke="#F5A435" stroke-width="2" stroke-linecap="round"/><circle cx="6.8" cy="5.3" r="4.9" fill="url(#mg)" stroke="#7C7894" stroke-width="1"/></svg>
<div style="left:973px;top:81px;width:125px;height:80px;border:1px solid #B4B4B4;box-sizing:border-box"></div>
<div style="left:978px;top:75px;width:46.200000000000045px;height:10px;background:#fff"></div>
<div style="left:980.20px;top:77.09px;font-size:12.3px;line-height:12.3px;font-weight:bold;color:#111;white-space:nowrap;transform:scaleX(0.9466);transform-origin:0 0;">Sort By</div>
<div style="left:980px;top:91px;width:110px;height:24px;background:#EEEEEE;border:1px solid #7D8FA3;box-sizing:border-box"></div>
<div style="left:981px;top:92px;width:89px;height:1px;background:#C4D8EE"></div>
<div style="left:981px;top:113px;width:89px;height:1px;background:#C4D8EE"></div>
<div style="left:1070px;top:91px;width:20px;height:24px;background:linear-gradient(#E2ECF6 0%,#FFFFFF 38%,#DCE6F2 62%,#C2D4E8 100%);border:1px solid #7D8FA3;box-sizing:border-box"></div>
<svg style="left:1075.0px;top:101.0px" width="10" height="6" viewBox="0 0 10 6"><path d="M0 0 L10 0 L5 5.5 Z" fill="#1E1E1E"/></svg>
<div style="left:982.90px;top:97.42px;font-size:12.5px;line-height:12.5px;font-weight:normal;color:#1E1E28;white-space:nowrap;transform:scaleX(0.9746);transform-origin:0 0;">Site</div>
<div style="left:980px;top:123px;width:110px;height:24px;background:#EEEEEE;border:1px solid #7D8FA3;box-sizing:border-box"></div>
<div style="left:981px;top:124px;width:89px;height:1px;background:#C4D8EE"></div>
<div style="left:981px;top:145px;width:89px;height:1px;background:#C4D8EE"></div>
<div style="left:1070px;top:123px;width:20px;height:24px;background:linear-gradient(#E2ECF6 0%,#FFFFFF 38%,#DCE6F2 62%,#C2D4E8 100%);border:1px solid #7D8FA3;box-sizing:border-box"></div>
<svg style="left:1075.0px;top:133.0px" width="10" height="6" viewBox="0 0 10 6"><path d="M0 0 L10 0 L5 5.5 Z" fill="#1E1E1E"/></svg>
<div style="left:982.90px;top:129.42px;font-size:12.5px;line-height:12.5px;font-weight:normal;color:#1E1E28;white-space:nowrap;transform:scaleX(1.0004);transform-origin:0 0;">Ascending</div>
<div style="left:1103px;top:81px;width:95px;height:40px;border:1px solid #B4B4B4;box-sizing:border-box"></div>
<div style="left:1108px;top:75px;width:56.40000000000009px;height:10px;background:#fff"></div>
<div style="left:1109.40px;top:77.09px;font-size:12.3px;line-height:12.3px;font-weight:bold;color:#111;white-space:nowrap;transform:scaleX(0.9209);transform-origin:0 0;">Group By</div>
<div style="left:1110px;top:91px;width:85px;height:24px;background:#EEEEEE;border:1px solid #7D8FA3;box-sizing:border-box"></div>
<div style="left:1111px;top:92px;width:64px;height:1px;background:#C4D8EE"></div>
<div style="left:1111px;top:113px;width:64px;height:1px;background:#C4D8EE"></div>
<div style="left:1175px;top:91px;width:20px;height:24px;background:linear-gradient(#E2ECF6 0%,#FFFFFF 38%,#DCE6F2 62%,#C2D4E8 100%);border:1px solid #7D8FA3;box-sizing:border-box"></div>
<svg style="left:1180.0px;top:101.0px" width="10" height="6" viewBox="0 0 10 6"><path d="M0 0 L10 0 L5 5.5 Z" fill="#1E1E1E"/></svg>
<div style="left:1112.20px;top:97.42px;font-size:12.5px;line-height:12.5px;font-weight:normal;color:#1E1E28;white-space:nowrap;transform:scaleX(0.9978);transform-origin:0 0;">Site</div>
<div style="left:1206px;top:80px;width:100px;height:80px;border:1px solid #B4B4B4;box-sizing:border-box"></div>
<div style="left:1213px;top:86px;width:19px;height:19px;border:1px solid #B8B8B8;box-sizing:border-box;background:#fff"></div>
<div style="left:1213px;top:90.34px;font-size:12px;line-height:12px;font-weight:normal;color:#333;white-space:nowrap;width:19px;text-align:center;">-</div>
<div style="left:1213px;top:112px;width:19px;height:19px;border:1px solid #B8B8B8;box-sizing:border-box;background:#fff"></div>
<div style="left:1213px;top:116.34px;font-size:12px;line-height:12px;font-weight:normal;color:#333;white-space:nowrap;width:19px;text-align:center;">-</div>
<div style="left:1242.60px;top:91.09px;font-size:12.3px;line-height:12.3px;font-weight:bold;color:#222;white-space:nowrap;transform:scaleX(0.9781);transform-origin:0 0;">Width</div>
<div style="left:1242.40px;top:117.09px;font-size:12.3px;line-height:12.3px;font-weight:bold;color:#222;white-space:nowrap;transform:scaleX(0.9800);transform-origin:0 0;">Height</div>
<div style="left:1293px;top:86px;width:19px;height:19px;border:1px solid #B8B8B8;box-sizing:border-box;background:#fff"></div>
<div style="left:1293px;top:112px;width:19px;height:19px;border:1px solid #B8B8B8;box-sizing:border-box;background:#fff"></div>
<div style="left:1236px;top:137px;width:49px;height:25px;border:1px solid #B8B8B8;box-sizing:border-box;background:#fff"></div>
<div style="left:1244.70px;top:142.42px;font-size:12.5px;line-height:12.5px;font-weight:normal;color:#26283A;white-space:nowrap;transform:scaleX(1.0350);transform-origin:0 0;">Reset</div>
<div style="left:1302px;top:30px;width:8px;height:700px;background:#E8906A"></div>
<div style="left:1302px;top:30px;width:1px;height:691px;background:#DA8660"></div>
<div style="left:1309px;top:0px;width:1px;height:728px;background:#B97A5A"></div>
<div style="left:9px;top:155px;width:1291px;height:9px;background:#EEEEEE;border:1px solid #A8A8A8;box-sizing:border-box"></div>
<svg style="left:12px;top:157px" width="22" height="6" viewBox="0 0 22 6"><path d="M0 5.5 L4 0.5 L8 5.5 Z" fill="#4A78C8"/><path d="M0 5.5 L4 0.5" stroke="#222" stroke-width="0.8"/><path d="M12 0.5 L20 0.5 L16 5.5 Z" fill="#4A78C8"/><path d="M12 0.5 L20 0.5" stroke="#222" stroke-width="0.8"/></svg>
<div style="left:22px;top:160px;width:1px;height:1px;background:#8A9AAA"></div>
<div style="left:34px;top:160px;width:1262px;height:1px;background:repeating-linear-gradient(90deg,#8A9AAA 0 1px,transparent 1px 4px)"></div>
<div style="left:9px;top:165px;width:1291px;height:497px;border:1px solid #B4B4B4;box-sizing:border-box"></div>
<div style="left:11px;top:167px;width:534px;height:46px;border:1px solid #7D8FA3;border-bottom:none;box-sizing:border-box"></div>
<div style="left:11px;top:212px;width:533px;height:1px;background:#7D8FA3"></div>
<div style="left:11px;top:212px;width:2px;height:447px;background:#7D8FA3"></div>
<div style="left:542px;top:213px;width:1px;height:446px;background:#7D8FA3"></div>
<div style="left:11px;top:658px;width:532px;height:1px;background:#7D8FA3"></div>
<div style="left:408.70px;top:174.42px;font-size:12.5px;line-height:12.5px;font-weight:normal;color:#26283A;white-space:nowrap;transform:scaleX(0.9525);transform-origin:0 0;">Month</div>
<div style="left:408.70px;top:195.92px;font-size:12.5px;line-height:12.5px;font-weight:normal;color:#26283A;white-space:nowrap;transform:scaleX(1.0147);transform-origin:0 0;">Week</div>
<div style="left:13px;top:219px;width:530px;height:1px;background:#B8B8B8"></div>
<div style="left:13px;top:219px;width:1px;height:52px;background:#B8B8B8"></div>
<div style="left:15px;top:221px;width:527px;height:8px;background:#000"></div>
<div style="left:18.40px;top:239.34px;font-size:12px;line-height:12px;font-weight:bold;color:#222;white-space:nowrap;transform:scaleX(0.9370);transform-origin:0 0;">Site : SANFRANCISCO</div>
<div style="left:17.90px;top:254.34px;font-size:12px;line-height:12px;font-weight:bold;color:#222;white-space:nowrap;transform:scaleX(0.9701);transform-origin:0 0;">Product :MOTO E3(MOTO E3)</div>
<div style="left:405.90px;top:235.92px;font-size:12.5px;line-height:12.5px;font-weight:normal;color:#26283A;white-space:nowrap;transform:scaleX(0.9977);transform-origin:0 0;">Total Stock</div>
<div style="left:405.90px;top:256.12px;font-size:12.5px;line-height:12.5px;font-weight:normal;color:#26283A;white-space:nowrap;transform:scaleX(0.9568);transform-origin:0 0;">Effective Availability</div>
<div style="left:13px;top:271px;width:529px;height:1px;background:#7D8FA3"></div>
<div style="left:13px;top:271px;width:1px;height:218px;background:#7D8FA3"></div>
<div style="left:14px;top:272px;width:528px;height:20px;background:#FF6E3C"></div>
<div style="left:14px;top:272px;width:528px;height:20px;overflow:hidden">
<div style="left:0px;top:0px;width:119px;height:19px;box-sizing:border-box;border:1px solid #7E2E16;box-shadow:inset 1px 1px 0 #FF6E3C;background:#C54E2D"></div>
<div style="left:0px;top:4.92px;width:119px;font-size:12.5px;line-height:12.5px;color:#F6EEF6;text-align:center;white-space:nowrap">Asset ID</div>
<div style="left:120px;top:0px;width:109px;height:19px;box-sizing:border-box;border:1px solid #7E2E16;box-shadow:inset 1px 1px 0 #FF6E3C;background:#C54E2D"></div>
<div style="left:120px;top:4.92px;width:109px;font-size:12.5px;line-height:12.5px;color:#F6EEF6;text-align:center;white-space:nowrap">Site</div>
<div style="left:230px;top:0px;width:99px;height:19px;box-sizing:border-box;border:1px solid #7E2E16;box-shadow:inset 1px 1px 0 #FF6E3C;background:#C54E2D"></div>
<div style="left:230px;top:4.92px;width:99px;font-size:12.5px;line-height:12.5px;color:#F6EEF6;text-align:center;white-space:nowrap">Product</div>
<div style="left:330px;top:0px;width:94px;height:19px;box-sizing:border-box;border:1px solid #7E2E16;box-shadow:inset 1px 1px 0 #FF6E3C;background:#C54E2D"></div>
<div style="left:330px;top:4.92px;width:94px;font-size:12.5px;line-height:12.5px;color:#F6EEF6;text-align:center;white-space:nowrap">Status</div>
<div style="left:425px;top:0px;width:130px;height:19px;box-sizing:border-box;border:1px solid #7E2E16;box-shadow:inset 1px 1px 0 #FF6E3C;background:#C54E2D"></div>
<div style="left:425px;top:4.92px;width:130px;font-size:12.5px;line-height:12.5px;color:#F6EEF6;text-align:center;white-space:nowrap">MFG Serial Number</div>
</div>
<div style="left:14.60px;top:295.92px;font-size:12.5px;line-height:12.5px;font-weight:normal;color:#111;white-space:nowrap;transform:scaleX(0.9896);transform-origin:0 0;">ASSET-1186</div>
<div style="left:134.80px;top:295.92px;font-size:12.5px;line-height:12.5px;font-weight:normal;color:#111;white-space:nowrap;transform:scaleX(0.9524);transform-origin:0 0;">SANFRANCISCO</div>
<div style="left:245.00px;top:295.92px;font-size:12.5px;line-height:12.5px;font-weight:normal;color:#111;white-space:nowrap;transform:scaleX(0.9263);transform-origin:0 0;">MOTO E3</div>
<div style="left:345px;top:295.92px;font-size:12.5px;line-height:12.5px;font-weight:normal;color:#111;white-space:nowrap;">In</div>
<div style="left:13px;top:311px;width:529px;height:1px;background:#C4743E"></div>
<div style="left:14.60px;top:315.92px;font-size:12.5px;line-height:12.5px;font-weight:normal;color:#111;white-space:nowrap;transform:scaleX(0.9896);transform-origin:0 0;">ASSET-1187</div>
<div style="left:134.80px;top:315.92px;font-size:12.5px;line-height:12.5px;font-weight:normal;color:#111;white-space:nowrap;transform:scaleX(0.9524);transform-origin:0 0;">SANFRANCISCO</div>
<div style="left:245.00px;top:315.92px;font-size:12.5px;line-height:12.5px;font-weight:normal;color:#111;white-space:nowrap;transform:scaleX(0.9263);transform-origin:0 0;">MOTO E3</div>
<div style="left:345px;top:315.92px;font-size:12.5px;line-height:12.5px;font-weight:normal;color:#111;white-space:nowrap;">In</div>
<div style="left:13px;top:331px;width:529px;height:1px;background:#C4743E"></div>
<div style="left:14.60px;top:335.92px;font-size:12.5px;line-height:12.5px;font-weight:normal;color:#111;white-space:nowrap;transform:scaleX(0.9896);transform-origin:0 0;">ASSET-1188</div>
<div style="left:134.80px;top:335.92px;font-size:12.5px;line-height:12.5px;font-weight:normal;color:#111;white-space:nowrap;transform:scaleX(0.9524);transform-origin:0 0;">SANFRANCISCO</div>
<div style="left:245.00px;top:335.92px;font-size:12.5px;line-height:12.5px;font-weight:normal;color:#111;white-space:nowrap;transform:scaleX(0.9263);transform-origin:0 0;">MOTO E3</div>
<div style="left:345px;top:335.92px;font-size:12.5px;line-height:12.5px;font-weight:normal;color:#111;white-space:nowrap;">In</div>
<div style="left:13px;top:351px;width:529px;height:1px;background:#C4743E"></div>
<div style="left:14.60px;top:355.92px;font-size:12.5px;line-height:12.5px;font-weight:normal;color:#111;white-space:nowrap;transform:scaleX(0.9896);transform-origin:0 0;">ASSET-1189</div>
<div style="left:134.80px;top:355.92px;font-size:12.5px;line-height:12.5px;font-weight:normal;color:#111;white-space:nowrap;transform:scaleX(0.9524);transform-origin:0 0;">SANFRANCISCO</div>
<div style="left:245.00px;top:355.92px;font-size:12.5px;line-height:12.5px;font-weight:normal;color:#111;white-space:nowrap;transform:scaleX(0.9263);transform-origin:0 0;">MOTO E3</div>
<div style="left:345px;top:355.92px;font-size:12.5px;line-height:12.5px;font-weight:normal;color:#111;white-space:nowrap;">In</div>
<div style="left:13px;top:371px;width:529px;height:1px;background:#C4743E"></div>
<div style="left:14.60px;top:375.92px;font-size:12.5px;line-height:12.5px;font-weight:normal;color:#111;white-space:nowrap;transform:scaleX(0.9896);transform-origin:0 0;">ASSET-1190</div>
<div style="left:134.80px;top:375.92px;font-size:12.5px;line-height:12.5px;font-weight:normal;color:#111;white-space:nowrap;transform:scaleX(0.9524);transform-origin:0 0;">SANFRANCISCO</div>
<div style="left:245.00px;top:375.92px;font-size:12.5px;line-height:12.5px;font-weight:normal;color:#111;white-space:nowrap;transform:scaleX(0.9263);transform-origin:0 0;">MOTO E3</div>
<div style="left:345px;top:375.92px;font-size:12.5px;line-height:12.5px;font-weight:normal;color:#111;white-space:nowrap;">In</div>
<div style="left:13px;top:391px;width:529px;height:1px;background:#C4743E"></div>
<div style="left:14.60px;top:395.92px;font-size:12.5px;line-height:12.5px;font-weight:normal;color:#111;white-space:nowrap;transform:scaleX(0.9896);transform-origin:0 0;">ASSET-1191</div>
<div style="left:134.80px;top:395.92px;font-size:12.5px;line-height:12.5px;font-weight:normal;color:#111;white-space:nowrap;transform:scaleX(0.9524);transform-origin:0 0;">SANFRANCISCO</div>
<div style="left:245.00px;top:395.92px;font-size:12.5px;line-height:12.5px;font-weight:normal;color:#111;white-space:nowrap;transform:scaleX(0.9263);transform-origin:0 0;">MOTO E3</div>
<div style="left:345px;top:395.92px;font-size:12.5px;line-height:12.5px;font-weight:normal;color:#111;white-space:nowrap;">In</div>
<div style="left:13px;top:411px;width:529px;height:1px;background:#C4743E"></div>
<div style="left:14.60px;top:415.92px;font-size:12.5px;line-height:12.5px;font-weight:normal;color:#111;white-space:nowrap;transform:scaleX(0.9896);transform-origin:0 0;">ASSET-1192</div>
<div style="left:134.80px;top:415.92px;font-size:12.5px;line-height:12.5px;font-weight:normal;color:#111;white-space:nowrap;transform:scaleX(0.9524);transform-origin:0 0;">SANFRANCISCO</div>
<div style="left:245.00px;top:415.92px;font-size:12.5px;line-height:12.5px;font-weight:normal;color:#111;white-space:nowrap;transform:scaleX(0.9263);transform-origin:0 0;">MOTO E3</div>
<div style="left:345px;top:415.92px;font-size:12.5px;line-height:12.5px;font-weight:normal;color:#111;white-space:nowrap;">In</div>
<div style="left:13px;top:431px;width:529px;height:1px;background:#C4743E"></div>
<div style="left:14.60px;top:435.92px;font-size:12.5px;line-height:12.5px;font-weight:normal;color:#111;white-space:nowrap;transform:scaleX(0.9896);transform-origin:0 0;">ASSET-1193</div>
<div style="left:134.80px;top:435.92px;font-size:12.5px;line-height:12.5px;font-weight:normal;color:#111;white-space:nowrap;transform:scaleX(0.9524);transform-origin:0 0;">SANFRANCISCO</div>
<div style="left:245.00px;top:435.92px;font-size:12.5px;line-height:12.5px;font-weight:normal;color:#111;white-space:nowrap;transform:scaleX(0.9263);transform-origin:0 0;">MOTO E3</div>
<div style="left:345px;top:435.92px;font-size:12.5px;line-height:12.5px;font-weight:normal;color:#111;white-space:nowrap;">In</div>
<div style="left:13px;top:451px;width:529px;height:1px;background:#C4743E"></div>
<div style="left:14.60px;top:455.92px;font-size:12.5px;line-height:12.5px;font-weight:normal;color:#111;white-space:nowrap;transform:scaleX(0.9896);transform-origin:0 0;">ASSET-1194</div>
<div style="left:134.80px;top:455.92px;font-size:12.5px;line-height:12.5px;font-weight:normal;color:#111;white-space:nowrap;transform:scaleX(0.9524);transform-origin:0 0;">SANFRANCISCO</div>
<div style="left:245.00px;top:455.92px;font-size:12.5px;line-height:12.5px;font-weight:normal;color:#111;white-space:nowrap;transform:scaleX(0.9263);transform-origin:0 0;">MOTO E3</div>
<div style="left:345px;top:455.92px;font-size:12.5px;line-height:12.5px;font-weight:normal;color:#111;white-space:nowrap;">In</div>
<div style="left:13px;top:471px;width:529px;height:1px;background:#C4743E"></div>
<div style="left:14.60px;top:475.92px;font-size:12.5px;line-height:12.5px;font-weight:normal;color:#111;white-space:nowrap;transform:scaleX(0.9896);transform-origin:0 0;">ASSET-1195</div>
<div style="left:134.80px;top:475.92px;font-size:12.5px;line-height:12.5px;font-weight:normal;color:#111;white-space:nowrap;transform:scaleX(0.9524);transform-origin:0 0;">SANFRANCISCO</div>
<div style="left:245.00px;top:475.92px;font-size:12.5px;line-height:12.5px;font-weight:normal;color:#111;white-space:nowrap;transform:scaleX(0.9263);transform-origin:0 0;">MOTO E3</div>
<div style="left:345px;top:475.92px;font-size:12.5px;line-height:12.5px;font-weight:normal;color:#111;white-space:nowrap;">In</div>
<div style="left:133px;top:292px;width:1px;height:197px;background:#C4743E"></div>
<div style="left:243px;top:292px;width:1px;height:197px;background:#C4743E"></div>
<div style="left:343px;top:292px;width:1px;height:197px;background:#C4743E"></div>
<div style="left:438px;top:292px;width:1px;height:197px;background:#C4743E"></div>
<div style="left:13px;top:489px;width:529px;height:1px;background:#7D8FA3"></div>
<div style="left:13px;top:641px;width:529px;height:18px;background:#EEEEEE;border-top:1px solid #7D8FA3;border-bottom:1px solid #7D8FA3;box-sizing:border-box"></div>
<div style="left:13px;top:642px;width:529px;height:1px;background:#C8DCF0"></div>
<div style="left:13px;top:657px;width:529px;height:1px;background:#B8CCE0"></div>
<div style="left:13px;top:641px;width:15px;height:17px;background:#EEEEEE;border:1px solid #7D8FA3;border-right-color:#C0C8D0;box-sizing:border-box"></div>
<svg style="left:18px;top:645px" width="5" height="9" viewBox="0 0 5 9"><path d="M5 0 L5 9 L0 4.5 Z" fill="#1E1E1E"/></svg>
<div style="left:527px;top:641px;width:15px;height:17px;background:#EEEEEE;border:1px solid #7D8FA3;border-left-color:#C0C8D0;box-sizing:border-box"></div>
<svg style="left:532px;top:645px" width="5" height="9" viewBox="0 0 5 9"><path d="M0 0 L0 9 L5 4.5 Z" fill="#1E1E1E"/></svg>
<div style="left:28px;top:641px;width:146px;height:16px;border:1px solid #FFC000;box-sizing:border-box;background:radial-gradient(ellipse 40px 14px at 100% 100%, rgba(222,140,90,0.55), rgba(222,140,90,0) 100%),linear-gradient(180deg,#E89A64 0%,#F2C6A4 12%,#ECB48C 55%,#E6A072 100%)"></div>
<div style="left:99px;top:645px;width:1px;height:8px;background:#B8A8A0"></div>
<div style="left:101px;top:645px;width:1px;height:8px;background:#B8A8A0"></div>
<div style="left:103px;top:645px;width:1px;height:8px;background:#B8A8A0"></div>
<div style="left:544px;top:168px;width:9px;height:491px;background:#EEEEEE;border:1px solid #A8A8A8;border-bottom:none;box-sizing:border-box"></div>
<svg style="left:546px;top:171px" width="6" height="21" viewBox="0 0 6 21"><path d="M5 0 L5 8 L0.5 4 Z" fill="#4A78C8"/><path d="M5 0 L0.5 4" stroke="#222" stroke-width="0.8"/><path d="M0.5 12 L0.5 20 L5 16 Z" fill="#4A78C8"/><path d="M0.5 12 L0.5 20" stroke="#222" stroke-width="0.8"/></svg>
<div style="left:549px;top:181px;width:1px;height:1px;background:#8A9AAA"></div>
<div style="left:549px;top:193px;width:1px;height:463px;background:repeating-linear-gradient(180deg,#8A9AAA 0 1px,transparent 1px 4px)"></div>
<div style="left:554px;top:167px;width:742px;height:46px;border:2px solid #7D8FA3;border-bottom:1px solid #7D8FA3;border-right:1px solid #7D8FA3;box-sizing:border-box"></div>
<div style="left:556px;top:170px;width:723px;height:40px;overflow:hidden">
<div style="left:0px;top:0px;width:35px;height:20px;background:#C54E2D;border-top:1px solid #FF9455;border-left:1px solid #FF9455;border-bottom:2px solid #62200E;border-right:1px solid #5A1A0A;box-shadow:inset 1px 1px 0 #E2683A;box-sizing:border-box;color:#FFF4F0;font-size:12.5px;line-height:20px;text-align:center;white-space:nowrap;overflow:hidden">Dec...</div>
<div style="left:35px;top:0px;width:140px;height:20px;background:#C54E2D;border-top:1px solid #FF9455;border-left:1px solid #FF9455;border-bottom:2px solid #62200E;border-right:1px solid #5A1A0A;box-shadow:inset 1px 1px 0 #E2683A;box-sizing:border-box;color:#FFF4F0;font-size:12.5px;line-height:20px;text-align:center;white-space:nowrap;overflow:hidden">January 2018</div>
<div style="left:175px;top:0px;width:140px;height:20px;background:#C54E2D;border-top:1px solid #FF9455;border-left:1px solid #FF9455;border-bottom:2px solid #62200E;border-right:1px solid #5A1A0A;box-shadow:inset 1px 1px 0 #E2683A;box-sizing:border-box;color:#FFF4F0;font-size:12.5px;line-height:20px;text-align:center;white-space:nowrap;overflow:hidden">February 2018</div>
<div style="left:315px;top:0px;width:140px;height:20px;background:#C54E2D;border-top:1px solid #FF9455;border-left:1px solid #FF9455;border-bottom:2px solid #62200E;border-right:1px solid #5A1A0A;box-shadow:inset 1px 1px 0 #E2683A;box-sizing:border-box;color:#FFF4F0;font-size:12.5px;line-height:20px;text-align:center;white-space:nowrap;overflow:hidden">March 2018</div>
<div style="left:455px;top:0px;width:175px;height:20px;background:#C54E2D;border-top:1px solid #FF9455;border-left:1px solid #FF9455;border-bottom:2px solid #62200E;border-right:1px solid #5A1A0A;box-shadow:inset 1px 1px 0 #E2683A;box-sizing:border-box;color:#FFF4F0;font-size:12.5px;line-height:20px;text-align:center;white-space:nowrap;overflow:hidden">April 2018</div>
<div style="left:630px;top:0px;width:140px;height:20px;background:#C54E2D;border-top:1px solid #FF9455;border-left:1px solid #FF9455;border-bottom:2px solid #62200E;border-right:1px solid #5A1A0A;box-shadow:inset 1px 1px 0 #E2683A;box-sizing:border-box;color:#FFF4F0;font-size:12.5px;line-height:20px;text-align:center;white-space:nowrap;overflow:hidden">May 2018</div>
<div style="left:0px;top:20px;width:35px;height:20px;background:#C54E2D;border-top:1px solid #FF9455;border-left:1px solid #FF9455;border-bottom:2px solid #62200E;border-right:1px solid #5A1A0A;box-shadow:inset 1px 1px 0 #E2683A;box-sizing:border-box;color:#FFF4F0;font-size:12.5px;line-height:20px;text-align:center;white-space:nowrap;overflow:hidden">31</div>
<div style="left:35px;top:20px;width:35px;height:20px;background:#C54E2D;border-top:1px solid #FF9455;border-left:1px solid #FF9455;border-bottom:2px solid #62200E;border-right:1px solid #5A1A0A;box-shadow:inset 1px 1px 0 #E2683A;box-sizing:border-box;color:#FFF4F0;font-size:12.5px;line-height:20px;text-align:center;white-space:nowrap;overflow:hidden">7</div>
<div style="left:70px;top:20px;width:35px;height:20px;background:#C54E2D;border-top:1px solid #FF9455;border-left:1px solid #FF9455;border-bottom:2px solid #62200E;border-right:1px solid #5A1A0A;box-shadow:inset 1px 1px 0 #E2683A;box-sizing:border-box;color:#FFF4F0;font-size:12.5px;line-height:20px;text-align:center;white-space:nowrap;overflow:hidden">14</div>
<div style="left:105px;top:20px;width:35px;height:20px;background:#C54E2D;border-top:1px solid #FF9455;border-left:1px solid #FF9455;border-bottom:2px solid #62200E;border-right:1px solid #5A1A0A;box-shadow:inset 1px 1px 0 #E2683A;box-sizing:border-box;color:#FFF4F0;font-size:12.5px;line-height:20px;text-align:center;white-space:nowrap;overflow:hidden">21</div>
<div style="left:140px;top:20px;width:35px;height:20px;background:#C54E2D;border-top:1px solid #FF9455;border-left:1px solid #FF9455;border-bottom:2px solid #62200E;border-right:1px solid #5A1A0A;box-shadow:inset 1px 1px 0 #E2683A;box-sizing:border-box;color:#FFF4F0;font-size:12.5px;line-height:20px;text-align:center;white-space:nowrap;overflow:hidden">28</div>
<div style="left:175px;top:20px;width:35px;height:20px;background:#C54E2D;border-top:1px solid #FF9455;border-left:1px solid #FF9455;border-bottom:2px solid #62200E;border-right:1px solid #5A1A0A;box-shadow:inset 1px 1px 0 #E2683A;box-sizing:border-box;color:#FFF4F0;font-size:12.5px;line-height:20px;text-align:center;white-space:nowrap;overflow:hidden">4</div>
<div style="left:210px;top:20px;width:35px;height:20px;background:#C54E2D;border-top:1px solid #FF9455;border-left:1px solid #FF9455;border-bottom:2px solid #62200E;border-right:1px solid #5A1A0A;box-shadow:inset 1px 1px 0 #E2683A;box-sizing:border-box;color:#FFF4F0;font-size:12.5px;line-height:20px;text-align:center;white-space:nowrap;overflow:hidden">11</div>
<div style="left:245px;top:20px;width:35px;height:20px;background:#C54E2D;border-top:1px solid #FF9455;border-left:1px solid #FF9455;border-bottom:2px solid #62200E;border-right:1px solid #5A1A0A;box-shadow:inset 1px 1px 0 #E2683A;box-sizing:border-box;color:#FFF4F0;font-size:12.5px;line-height:20px;text-align:center;white-space:nowrap;overflow:hidden">18</div>
<div style="left:280px;top:20px;width:35px;height:20px;background:#C54E2D;border-top:1px solid #FF9455;border-left:1px solid #FF9455;border-bottom:2px solid #62200E;border-right:1px solid #5A1A0A;box-shadow:inset 1px 1px 0 #E2683A;box-sizing:border-box;color:#FFF4F0;font-size:12.5px;line-height:20px;text-align:center;white-space:nowrap;overflow:hidden">25</div>
<div style="left:315px;top:20px;width:35px;height:20px;background:#C54E2D;border-top:1px solid #FF9455;border-left:1px solid #FF9455;border-bottom:2px solid #62200E;border-right:1px solid #5A1A0A;box-shadow:inset 1px 1px 0 #E2683A;box-sizing:border-box;color:#FFF4F0;font-size:12.5px;line-height:20px;text-align:center;white-space:nowrap;overflow:hidden">4</div>
<div style="left:350px;top:20px;width:35px;height:20px;background:#C54E2D;border-top:1px solid #FF9455;border-left:1px solid #FF9455;border-bottom:2px solid #62200E;border-right:1px solid #5A1A0A;box-shadow:inset 1px 1px 0 #E2683A;box-sizing:border-box;color:#FFF4F0;font-size:12.5px;line-height:20px;text-align:center;white-space:nowrap;overflow:hidden">11</div>
<div style="left:385px;top:20px;width:35px;height:20px;background:#C54E2D;border-top:1px solid #FF9455;border-left:1px solid #FF9455;border-bottom:2px solid #62200E;border-right:1px solid #5A1A0A;box-shadow:inset 1px 1px 0 #E2683A;box-sizing:border-box;color:#FFF4F0;font-size:12.5px;line-height:20px;text-align:center;white-space:nowrap;overflow:hidden">18</div>
<div style="left:420px;top:20px;width:35px;height:20px;background:#C54E2D;border-top:1px solid #FF9455;border-left:1px solid #FF9455;border-bottom:2px solid #62200E;border-right:1px solid #5A1A0A;box-shadow:inset 1px 1px 0 #E2683A;box-sizing:border-box;color:#FFF4F0;font-size:12.5px;line-height:20px;text-align:center;white-space:nowrap;overflow:hidden">25</div>
<div style="left:455px;top:20px;width:35px;height:20px;background:#C54E2D;border-top:1px solid #FF9455;border-left:1px solid #FF9455;border-bottom:2px solid #62200E;border-right:1px solid #5A1A0A;box-shadow:inset 1px 1px 0 #E2683A;box-sizing:border-box;color:#FFF4F0;font-size:12.5px;line-height:20px;text-align:center;white-space:nowrap;overflow:hidden">1</div>
<div style="left:490px;top:20px;width:35px;height:20px;background:#C54E2D;border-top:1px solid #FF9455;border-left:1px solid #FF9455;border-bottom:2px solid #62200E;border-right:1px solid #5A1A0A;box-shadow:inset 1px 1px 0 #E2683A;box-sizing:border-box;color:#FFF4F0;font-size:12.5px;line-height:20px;text-align:center;white-space:nowrap;overflow:hidden">8</div>
<div style="left:525px;top:20px;width:35px;height:20px;background:#C54E2D;border-top:1px solid #FF9455;border-left:1px solid #FF9455;border-bottom:2px solid #62200E;border-right:1px solid #5A1A0A;box-shadow:inset 1px 1px 0 #E2683A;box-sizing:border-box;color:#FFF4F0;font-size:12.5px;line-height:20px;text-align:center;white-space:nowrap;overflow:hidden">15</div>
<div style="left:560px;top:20px;width:35px;height:20px;background:#C54E2D;border-top:1px solid #FF9455;border-left:1px solid #FF9455;border-bottom:2px solid #62200E;border-right:1px solid #5A1A0A;box-shadow:inset 1px 1px 0 #E2683A;box-sizing:border-box;color:#FFF4F0;font-size:12.5px;line-height:20px;text-align:center;white-space:nowrap;overflow:hidden">22</div>
<div style="left:595px;top:20px;width:35px;height:20px;background:#C54E2D;border-top:1px solid #FF9455;border-left:1px solid #FF9455;border-bottom:2px solid #62200E;border-right:1px solid #5A1A0A;box-shadow:inset 1px 1px 0 #E2683A;box-sizing:border-box;color:#FFF4F0;font-size:12.5px;line-height:20px;text-align:center;white-space:nowrap;overflow:hidden">29</div>
<div style="left:630px;top:20px;width:35px;height:20px;background:#C54E2D;border-top:1px solid #FF9455;border-left:1px solid #FF9455;border-bottom:2px solid #62200E;border-right:1px solid #5A1A0A;box-shadow:inset 1px 1px 0 #E2683A;box-sizing:border-box;color:#FFF4F0;font-size:12.5px;line-height:20px;text-align:center;white-space:nowrap;overflow:hidden">6</div>
<div style="left:665px;top:20px;width:35px;height:20px;background:#C54E2D;border-top:1px solid #FF9455;border-left:1px solid #FF9455;border-bottom:2px solid #62200E;border-right:1px solid #5A1A0A;box-shadow:inset 1px 1px 0 #E2683A;box-sizing:border-box;color:#FFF4F0;font-size:12.5px;line-height:20px;text-align:center;white-space:nowrap;overflow:hidden">13</div>
<div style="left:700px;top:20px;width:35px;height:20px;background:#C54E2D;border-top:1px solid #FF9455;border-left:1px solid #FF9455;border-bottom:2px solid #62200E;border-right:1px solid #5A1A0A;box-shadow:inset 1px 1px 0 #E2683A;box-sizing:border-box;color:#FFF4F0;font-size:12.5px;line-height:20px;text-align:center;white-space:nowrap;overflow:hidden">20</div>
<div style="left:735px;top:20px;width:35px;height:20px;background:#C54E2D;border-top:1px solid #FF9455;border-left:1px solid #FF9455;border-bottom:2px solid #62200E;border-right:1px solid #5A1A0A;box-shadow:inset 1px 1px 0 #E2683A;box-sizing:border-box;color:#FFF4F0;font-size:12.5px;line-height:20px;text-align:center;white-space:nowrap;overflow:hidden">27</div>
</div>
<div style="left:1280px;top:170px;width:15px;height:42px;background:#EEEEEE;border-left:1px solid #7D8FA3;border-right:1px solid #7D8FA3;box-sizing:border-box"></div>
<div style="left:1280px;top:170px;width:15px;height:15px;background:#EEEEEE;border:1px solid #7D8FA3;border-bottom-color:#C0C8D0;box-sizing:border-box"></div>
<svg style="left:1283px;top:175px" width="9" height="5" viewBox="0 0 9 5"><path d="M0 5 L9 5 L4.5 0 Z" fill="#1E1E1E"/></svg>
<div style="left:1280px;top:197px;width:15px;height:15px;background:#EEEEEE;border:1px solid #7D8FA3;border-top-color:#C0C8D0;box-sizing:border-box"></div>
<svg style="left:1283px;top:202px" width="9" height="5" viewBox="0 0 9 5"><path d="M0 0 L9 0 L4.5 5 Z" fill="#1E1E1E"/></svg>
<div style="left:554px;top:216px;width:742px;height:443px;border:2px solid #7D8FA3;border-right:1px solid #7D8FA3;border-bottom:1px solid #7D8FA3;box-sizing:border-box"></div>
<div style="left:557px;top:219px;width:722px;height:8px;background:#000"></div>
<div style="left:556px;top:229px;width:35px;height:20px;box-sizing:border-box;overflow:hidden;background:#fff;"><div style="position:absolute;left:0;top:0;width:35px;height:20px;box-sizing:border-box;border-right:2px solid #A8A8A8;border-bottom:2px solid #A8A8A8;font-size:12.5px;font-weight:bold;line-height:22px;text-align:center;padding-left:2px;color:#111">10</div></div>
<div style="left:556px;top:249px;width:35px;height:20px;box-sizing:border-box;overflow:hidden;background:#fff;"><div style="position:absolute;left:0;top:0;width:35px;height:20px;box-sizing:border-box;border-right:2px solid #A8A8A8;border-bottom:2px solid #A8A8A8;font-size:12.5px;font-weight:bold;line-height:22px;text-align:center;padding-left:2px;color:#111">9</div></div>
<div style="left:591px;top:229px;width:35px;height:20px;box-sizing:border-box;overflow:hidden;background:#fff;"><div style="position:absolute;left:0;top:0;width:35px;height:20px;box-sizing:border-box;border-right:2px solid #A8A8A8;border-bottom:2px solid #A8A8A8;font-size:12.5px;font-weight:bold;line-height:22px;text-align:center;padding-left:2px;color:#111">10</div></div>
<div style="left:591px;top:249px;width:35px;height:20px;box-sizing:border-box;overflow:hidden;background:#fff;"><div style="position:absolute;left:0;top:0;width:35px;height:20px;box-sizing:border-box;border-right:2px solid #A8A8A8;border-bottom:2px solid #A8A8A8;font-size:12.5px;font-weight:bold;line-height:22px;text-align:center;padding-left:2px;color:#111">9</div></div>
<div style="left:626px;top:229px;width:35px;height:20px;box-sizing:border-box;overflow:hidden;background:#fff;"><div style="position:absolute;left:0;top:0;width:35px;height:20px;box-sizing:border-box;border-right:2px solid #A8A8A8;border-bottom:2px solid #A8A8A8;font-size:12.5px;font-weight:bold;line-height:22px;text-align:center;padding-left:2px;color:#111">10</div></div>
<div style="left:626px;top:249px;width:35px;height:20px;box-sizing:border-box;overflow:hidden;background:#fff;"><div style="position:absolute;left:0;top:0;width:35px;height:20px;box-sizing:border-box;border-right:2px solid #A8A8A8;border-bottom:2px solid #A8A8A8;font-size:12.5px;font-weight:bold;line-height:22px;text-align:center;padding-left:2px;color:#111">10</div></div>
<div style="left:661px;top:229px;width:35px;height:20px;box-sizing:border-box;overflow:hidden;background:#fff;"><div style="position:absolute;left:0;top:0;width:35px;height:20px;box-sizing:border-box;border-right:2px solid #A8A8A8;border-bottom:2px solid #A8A8A8;font-size:12.5px;font-weight:bold;line-height:22px;text-align:center;padding-left:2px;color:#111">10</div></div>
<div style="left:661px;top:249px;width:35px;height:20px;box-sizing:border-box;overflow:hidden;background:#fff;"><div style="position:absolute;left:0;top:0;width:35px;height:20px;box-sizing:border-box;border-right:2px solid #A8A8A8;border-bottom:2px solid #A8A8A8;font-size:12.5px;font-weight:bold;line-height:22px;text-align:center;padding-left:2px;color:#111">10</div></div>
<div style="left:696px;top:229px;width:35px;height:20px;box-sizing:border-box;overflow:hidden;background:#fff;"><div style="position:absolute;left:0;top:0;width:35px;height:20px;box-sizing:border-box;border-right:2px solid #A8A8A8;border-bottom:2px solid #A8A8A8;font-size:12.5px;font-weight:bold;line-height:22px;text-align:center;padding-left:2px;color:#111">10</div></div>
<div style="left:696px;top:249px;width:35px;height:20px;box-sizing:border-box;overflow:hidden;background:#fff;"><div style="position:absolute;left:0;top:0;width:35px;height:20px;box-sizing:border-box;border-right:2px solid #A8A8A8;border-bottom:2px solid #A8A8A8;font-size:12.5px;font-weight:bold;line-height:22px;text-align:center;padding-left:2px;color:#111">10</div></div>
<div style="left:731px;top:229px;width:35px;height:20px;box-sizing:border-box;overflow:hidden;background:#fff;"><div style="position:absolute;left:0;top:0;width:35px;height:20px;box-sizing:border-box;border-right:2px solid #A8A8A8;border-bottom:2px solid #A8A8A8;font-size:12.5px;font-weight:bold;line-height:22px;text-align:center;padding-left:2px;color:#111">10</div></div>
<div style="left:731px;top:249px;width:35px;height:20px;box-sizing:border-box;overflow:hidden;background:#fff;"><div style="position:absolute;left:0;top:0;width:35px;height:20px;box-sizing:border-box;border-right:2px solid #A8A8A8;border-bottom:2px solid #A8A8A8;font-size:12.5px;font-weight:bold;line-height:22px;text-align:center;padding-left:2px;color:#111">10</div></div>
<div style="left:766px;top:229px;width:35px;height:20px;box-sizing:border-box;overflow:hidden;background:#fff;"><div style="position:absolute;left:0;top:0;width:35px;height:20px;box-sizing:border-box;border-right:2px solid #A8A8A8;border-bottom:2px solid #A8A8A8;font-size:12.5px;font-weight:bold;line-height:22px;text-align:center;padding-left:2px;color:#111">10</div></div>
<div style="left:766px;top:249px;width:35px;height:20px;box-sizing:border-box;overflow:hidden;background:#fff;"><div style="position:absolute;left:0;top:0;width:35px;height:20px;box-sizing:border-box;border-right:2px solid #A8A8A8;border-bottom:2px solid #A8A8A8;font-size:12.5px;font-weight:bold;line-height:22px;text-align:center;padding-left:2px;color:#111">10</div></div>
<div style="left:801px;top:229px;width:35px;height:20px;box-sizing:border-box;overflow:hidden;background:#fff;"><div style="position:absolute;left:0;top:0;width:35px;height:20px;box-sizing:border-box;border-right:2px solid #A8A8A8;border-bottom:2px solid #A8A8A8;font-size:12.5px;font-weight:bold;line-height:22px;text-align:center;padding-left:2px;color:#111">10</div></div>
<div style="left:801px;top:249px;width:35px;height:20px;box-sizing:border-box;overflow:hidden;background:#fff;"><div style="position:absolute;left:0;top:0;width:35px;height:20px;box-sizing:border-box;border-right:2px solid #A8A8A8;border-bottom:2px solid #A8A8A8;font-size:12.5px;font-weight:bold;line-height:22px;text-align:center;padding-left:2px;color:#111">10</div></div>
<div style="left:836px;top:229px;width:35px;height:20px;box-sizing:border-box;overflow:hidden;background:#fff;"><div style="position:absolute;left:0;top:0;width:35px;height:20px;box-sizing:border-box;border-right:2px solid #A8A8A8;border-bottom:2px solid #A8A8A8;font-size:12.5px;font-weight:bold;line-height:22px;text-align:center;padding-left:2px;color:#111">10</div></div>
<div style="left:836px;top:249px;width:35px;height:20px;box-sizing:border-box;overflow:hidden;background:#fff;"><div style="position:absolute;left:0;top:0;width:35px;height:20px;box-sizing:border-box;border-right:2px solid #A8A8A8;border-bottom:2px solid #A8A8A8;font-size:12.5px;font-weight:bold;line-height:22px;text-align:center;padding-left:2px;color:#111">10</div></div>
<div style="left:871px;top:229px;width:35px;height:20px;box-sizing:border-box;overflow:hidden;background:#fff;"><div style="position:absolute;left:0;top:0;width:35px;height:20px;box-sizing:border-box;border-right:2px solid #A8A8A8;border-bottom:2px solid #A8A8A8;font-size:12.5px;font-weight:bold;line-height:22px;text-align:center;padding-left:2px;color:#111">10</div></div>
<div style="left:871px;top:249px;width:35px;height:20px;box-sizing:border-box;overflow:hidden;background:#fff;"><div style="position:absolute;left:0;top:0;width:35px;height:20px;box-sizing:border-box;border-right:2px solid #A8A8A8;border-bottom:2px solid #A8A8A8;font-size:12.5px;font-weight:bold;line-height:22px;text-align:center;padding-left:2px;color:#111">10</div></div>
<div style="left:906px;top:229px;width:35px;height:20px;box-sizing:border-box;overflow:hidden;background:#fff;"><div style="position:absolute;left:0;top:0;width:35px;height:20px;box-sizing:border-box;border-right:2px solid #A8A8A8;border-bottom:2px solid #A8A8A8;font-size:12.5px;font-weight:bold;line-height:22px;text-align:center;padding-left:2px;color:#111">10</div></div>
<div style="left:906px;top:249px;width:35px;height:20px;box-sizing:border-box;overflow:hidden;background:#fff;"><div style="position:absolute;left:0;top:0;width:35px;height:20px;box-sizing:border-box;border-right:2px solid #A8A8A8;border-bottom:2px solid #A8A8A8;font-size:12.5px;font-weight:bold;line-height:22px;text-align:center;padding-left:2px;color:#111">10</div></div>
<div style="left:941px;top:229px;width:35px;height:20px;box-sizing:border-box;overflow:hidden;background:#fff;"><div style="position:absolute;left:0;top:0;width:35px;height:20px;box-sizing:border-box;border-right:2px solid #A8A8A8;border-bottom:2px solid #A8A8A8;font-size:12.5px;font-weight:bold;line-height:22px;text-align:center;padding-left:2px;color:#111">10</div></div>
<div style="left:941px;top:249px;width:35px;height:20px;box-sizing:border-box;overflow:hidden;background:#fff;"><div style="position:absolute;left:0;top:0;width:35px;height:20px;box-sizing:border-box;border-right:2px solid #A8A8A8;border-bottom:2px solid #A8A8A8;font-size:12.5px;font-weight:bold;line-height:22px;text-align:center;padding-left:2px;color:#111">10</div></div>
<div style="left:976px;top:229px;width:35px;height:20px;box-sizing:border-box;overflow:hidden;background:#fff;"><div style="position:absolute;left:0;top:0;width:35px;height:20px;box-sizing:border-box;border-right:2px solid #A8A8A8;border-bottom:2px solid #A8A8A8;font-size:12.5px;font-weight:bold;line-height:22px;text-align:center;padding-left:2px;color:#111">10</div></div>
<div style="left:976px;top:249px;width:35px;height:20px;box-sizing:border-box;overflow:hidden;background:#fff;"><div style="position:absolute;left:0;top:0;width:35px;height:20px;box-sizing:border-box;border-right:2px solid #A8A8A8;border-bottom:2px solid #A8A8A8;font-size:12.5px;font-weight:bold;line-height:22px;text-align:center;padding-left:2px;color:#111">10</div></div>
<div style="left:1011px;top:229px;width:35px;height:20px;box-sizing:border-box;overflow:hidden;background:#fff;"><div style="position:absolute;left:0;top:0;width:35px;height:20px;box-sizing:border-box;border-right:2px solid #A8A8A8;border-bottom:2px solid #A8A8A8;font-size:12.5px;font-weight:bold;line-height:22px;text-align:center;padding-left:2px;color:#111">10</div></div>
<div style="left:1011px;top:249px;width:35px;height:20px;box-sizing:border-box;overflow:hidden;background:#fff;"><div style="position:absolute;left:0;top:0;width:35px;height:20px;box-sizing:border-box;border-right:2px solid #A8A8A8;border-bottom:2px solid #A8A8A8;font-size:12.5px;font-weight:bold;line-height:22px;text-align:center;padding-left:2px;color:#111">10</div></div>
<div style="left:1046px;top:229px;width:35px;height:20px;box-sizing:border-box;overflow:hidden;background:#fff;"><div style="position:absolute;left:0;top:0;width:35px;height:20px;box-sizing:border-box;border-right:2px solid #A8A8A8;border-bottom:2px solid #A8A8A8;font-size:12.5px;font-weight:bold;line-height:22px;text-align:center;padding-left:2px;color:#111">10</div></div>
<div style="left:1046px;top:249px;width:35px;height:20px;box-sizing:border-box;overflow:hidden;background:#fff;"><div style="position:absolute;left:0;top:0;width:35px;height:20px;box-sizing:border-box;border-right:2px solid #A8A8A8;border-bottom:2px solid #A8A8A8;font-size:12.5px;font-weight:bold;line-height:22px;text-align:center;padding-left:2px;color:#111">10</div></div>
<div style="left:1081px;top:229px;width:35px;height:20px;box-sizing:border-box;overflow:hidden;background:#fff;"><div style="position:absolute;left:0;top:0;width:35px;height:20px;box-sizing:border-box;border-right:2px solid #A8A8A8;border-bottom:2px solid #A8A8A8;font-size:12.5px;font-weight:bold;line-height:22px;text-align:center;padding-left:2px;color:#111">10</div></div>
<div style="left:1081px;top:249px;width:35px;height:20px;box-sizing:border-box;overflow:hidden;background:#fff;"><div style="position:absolute;left:0;top:0;width:35px;height:20px;box-sizing:border-box;border-right:2px solid #A8A8A8;border-bottom:2px solid #A8A8A8;font-size:12.5px;font-weight:bold;line-height:22px;text-align:center;padding-left:2px;color:#111">10</div></div>
<div style="left:1116px;top:229px;width:35px;height:20px;box-sizing:border-box;overflow:hidden;background:#fff;"><div style="position:absolute;left:0;top:0;width:35px;height:20px;box-sizing:border-box;border-right:2px solid #A8A8A8;border-bottom:2px solid #A8A8A8;font-size:12.5px;font-weight:bold;line-height:22px;text-align:center;padding-left:2px;color:#111">10</div></div>
<div style="left:1116px;top:249px;width:35px;height:20px;box-sizing:border-box;overflow:hidden;background:#fff;"><div style="position:absolute;left:0;top:0;width:35px;height:20px;box-sizing:border-box;border-right:2px solid #A8A8A8;border-bottom:2px solid #A8A8A8;font-size:12.5px;font-weight:bold;line-height:22px;text-align:center;padding-left:2px;color:#111">10</div></div>
<div style="left:1151px;top:229px;width:35px;height:20px;box-sizing:border-box;overflow:hidden;background:#fff;"><div style="position:absolute;left:0;top:0;width:35px;height:20px;box-sizing:border-box;border-right:2px solid #A8A8A8;border-bottom:2px solid #A8A8A8;font-size:12.5px;font-weight:bold;line-height:22px;text-align:center;padding-left:2px;color:#111">10</div></div>
<div style="left:1151px;top:249px;width:35px;height:20px;box-sizing:border-box;overflow:hidden;background:#fff;"><div style="position:absolute;left:0;top:0;width:35px;height:20px;box-sizing:border-box;border-right:2px solid #A8A8A8;border-bottom:2px solid #A8A8A8;font-size:12.5px;font-weight:bold;line-height:22px;text-align:center;padding-left:2px;color:#111">10</div></div>
<div style="left:1186px;top:229px;width:35px;height:20px;box-sizing:border-box;overflow:hidden;background:#fff;"><div style="position:absolute;left:0;top:0;width:35px;height:20px;box-sizing:border-box;border-right:2px solid #A8A8A8;border-bottom:2px solid #A8A8A8;font-size:12.5px;font-weight:bold;line-height:22px;text-align:center;padding-left:2px;color:#111">10</div></div>
<div style="left:1186px;top:249px;width:35px;height:20px;box-sizing:border-box;overflow:hidden;background:#fff;"><div style="position:absolute;left:0;top:0;width:35px;height:20px;box-sizing:border-box;border-right:2px solid #A8A8A8;border-bottom:2px solid #A8A8A8;font-size:12.5px;font-weight:bold;line-height:22px;text-align:center;padding-left:2px;color:#111">10</div></div>
<div style="left:1221px;top:229px;width:35px;height:20px;box-sizing:border-box;overflow:hidden;background:#fff;"><div style="position:absolute;left:0;top:0;width:35px;height:20px;box-sizing:border-box;border-right:2px solid #A8A8A8;border-bottom:2px solid #A8A8A8;font-size:12.5px;font-weight:bold;line-height:22px;text-align:center;padding-left:2px;color:#111">10</div></div>
<div style="left:1221px;top:249px;width:35px;height:20px;box-sizing:border-box;overflow:hidden;background:#fff;"><div style="position:absolute;left:0;top:0;width:35px;height:20px;box-sizing:border-box;border-right:2px solid #A8A8A8;border-bottom:2px solid #A8A8A8;font-size:12.5px;font-weight:bold;line-height:22px;text-align:center;padding-left:2px;color:#111">10</div></div>
<div style="left:1256px;top:229px;width:23px;height:20px;box-sizing:border-box;overflow:hidden;background:#fff;"><div style="position:absolute;left:0;top:0;width:35px;height:20px;box-sizing:border-box;border-right:2px solid #A8A8A8;border-bottom:2px solid #A8A8A8;font-size:12.5px;font-weight:bold;line-height:22px;text-align:center;padding-left:2px;color:#111">10</div></div>
<div style="left:1256px;top:249px;width:23px;height:20px;box-sizing:border-box;overflow:hidden;background:#fff;"><div style="position:absolute;left:0;top:0;width:35px;height:20px;box-sizing:border-box;border-right:2px solid #A8A8A8;border-bottom:2px solid #A8A8A8;font-size:12.5px;font-weight:bold;line-height:22px;text-align:center;padding-left:2px;color:#111">10</div></div>
<div style="left:557px;top:270px;width:722px;height:17px;background:#C54E2D;border-top:1px solid #FF9455;border-left:1px solid #FF9455;border-bottom:2px solid #62200E;box-shadow:inset 1px 1px 0 #E2683A;box-sizing:border-box"></div>
<div style="left:556px;top:288px;width:723px;height:1px;background:#B8C4D0"></div>
<div style="left:556px;top:290px;width:723px;height:2px;background:#7D8FA3"></div>
<div style="left:556px;top:311px;width:723px;height:1px;background:#D24E2C"></div>
<div style="left:556px;top:331px;width:723px;height:1px;background:#D24E2C"></div>
<div style="left:556px;top:351px;width:723px;height:1px;background:#D24E2C"></div>
<div style="left:556px;top:371px;width:723px;height:1px;background:#D24E2C"></div>
<div style="left:556px;top:391px;width:723px;height:1px;background:#D24E2C"></div>
<div style="left:556px;top:411px;width:723px;height:1px;background:#D24E2C"></div>
<div style="left:556px;top:431px;width:723px;height:1px;background:#D24E2C"></div>
<div style="left:556px;top:451px;width:723px;height:1px;background:#D24E2C"></div>
<div style="left:556px;top:471px;width:723px;height:1px;background:#D24E2C"></div>
<div style="left:556px;top:491px;width:723px;height:1px;background:#D24E2C"></div>
<div style="left:590px;top:292px;width:1px;height:202px;background:#D24E2C"></div>
<div style="left:625px;top:292px;width:1px;height:202px;background:#D24E2C"></div>
<div style="left:660px;top:292px;width:1px;height:202px;background:#D24E2C"></div>
<div style="left:695px;top:292px;width:1px;height:202px;background:#D24E2C"></div>
<div style="left:730px;top:292px;width:1px;height:202px;background:#D24E2C"></div>
<div style="left:765px;top:292px;width:1px;height:202px;background:#D24E2C"></div>
<div style="left:800px;top:292px;width:1px;height:202px;background:#D24E2C"></div>
<div style="left:835px;top:292px;width:1px;height:202px;background:#D24E2C"></div>
<div style="left:870px;top:292px;width:1px;height:202px;background:#D24E2C"></div>
<div style="left:905px;top:292px;width:1px;height:202px;background:#D24E2C"></div>
<div style="left:940px;top:292px;width:1px;height:202px;background:#D24E2C"></div>
<div style="left:975px;top:292px;width:1px;height:202px;background:#D24E2C"></div>
<div style="left:1010px;top:292px;width:1px;height:202px;background:#D24E2C"></div>
<div style="left:1045px;top:292px;width:1px;height:202px;background:#D24E2C"></div>
<div style="left:1080px;top:292px;width:1px;height:202px;background:#D24E2C"></div>
<div style="left:1115px;top:292px;width:1px;height:202px;background:#D24E2C"></div>
<div style="left:1150px;top:292px;width:1px;height:202px;background:#D24E2C"></div>
<div style="left:1185px;top:292px;width:1px;height:202px;background:#D24E2C"></div>
<div style="left:1220px;top:292px;width:1px;height:202px;background:#D24E2C"></div>
<div style="left:1255px;top:292px;width:1px;height:202px;background:#D24E2C"></div>
<div style="left:556px;top:494px;width:723px;height:1px;background:#7D8FA3"></div>
<div style="left:1280px;top:217px;width:15px;height:423px;background:#EEEEEE;border-left:1px solid #7D8FA3;border-right:1px solid #7D8FA3;box-sizing:border-box"></div>
<div style="left:1280px;top:217px;width:15px;height:15px;background:#EEEEEE;border:1px solid #7D8FA3;border-bottom-color:#C0C8D0;box-sizing:border-box"></div>
<svg style="left:1283px;top:222px" width="9" height="5" viewBox="0 0 9 5"><path d="M0 5 L9 5 L4.5 0 Z" fill="#1E1E1E"/></svg>
<div style="left:1280px;top:625px;width:15px;height:15px;background:#EEEEEE;border:1px solid #7D8FA3;border-top-color:#C0C8D0;box-sizing:border-box"></div>
<svg style="left:1283px;top:630px" width="9" height="5" viewBox="0 0 9 5"><path d="M0 0 L9 0 L4.5 5 Z" fill="#1E1E1E"/></svg>
<div style="left:556px;top:641px;width:723px;height:18px;background:#EEEEEE;border-top:1px solid #7D8FA3;border-bottom:1px solid #7D8FA3;box-sizing:border-box"></div>
<div style="left:556px;top:642px;width:723px;height:1px;background:#C8DCF0"></div>
<div style="left:556px;top:657px;width:723px;height:1px;background:#B8CCE0"></div>
<div style="left:556px;top:641px;width:15px;height:17px;background:#EEEEEE;border:1px solid #7D8FA3;border-right-color:#C0C8D0;box-sizing:border-box"></div>
<svg style="left:561px;top:645px" width="5" height="9" viewBox="0 0 5 9"><path d="M5 0 L5 9 L0 4.5 Z" fill="#1E1E1E"/></svg>
<div style="left:1264px;top:641px;width:15px;height:17px;background:#EEEEEE;border:1px solid #7D8FA3;border-left-color:#C0C8D0;box-sizing:border-box"></div>
<svg style="left:1269px;top:645px" width="5" height="9" viewBox="0 0 5 9"><path d="M0 0 L0 9 L5 4.5 Z" fill="#1E1E1E"/></svg>
<div style="left:570px;top:641px;width:528px;height:16px;border:1px solid #FFC000;box-sizing:border-box;background:radial-gradient(ellipse 40px 14px at 100% 100%, rgba(222,140,90,0.55), rgba(222,140,90,0) 100%),linear-gradient(180deg,#E89A64 0%,#F2C6A4 12%,#ECB48C 55%,#E6A072 100%)"></div>
<div style="left:832px;top:645px;width:1px;height:8px;background:#B8A8A0"></div>
<div style="left:834px;top:645px;width:1px;height:8px;background:#B8A8A0"></div>
<div style="left:836px;top:645px;width:1px;height:8px;background:#B8A8A0"></div>
<div style="left:1279px;top:641px;width:16px;height:17px;background:#EEEEEE"></div>
<div style="left:14px;top:671px;width:12px;height:12px;background:#A8A8A8;border:1px solid #111;box-sizing:border-box"></div>
<div style="left:31.70px;top:672.51px;font-size:11.8px;line-height:11.8px;font-weight:bold;color:#2A2E3A;white-space:nowrap;transform:scaleX(0.9456);transform-origin:0 0;">Not Available/In (NA)</div>
<div style="left:151px;top:671px;width:12px;height:12px;background:#FF2000;border:1px solid #111;box-sizing:border-box"></div>
<div style="left:165.60px;top:672.51px;font-size:11.8px;line-height:11.8px;font-weight:bold;color:#2A2E3A;white-space:nowrap;transform:scaleX(0.9639);transform-origin:0 0;">Short</div>
<div style="left:205px;top:671px;width:12px;height:12px;background:#C8F0D8;border:1px solid #111;box-sizing:border-box"></div>
<div style="left:219.80px;top:672.51px;font-size:11.8px;line-height:11.8px;font-weight:bold;color:#2A2E3A;white-space:nowrap;transform:scaleX(1.0024);transform-origin:0 0;">Reserved/T-Reserved</div>
<div style="left:350px;top:671px;width:12px;height:12px;background:#6E8A34;border:1px solid #111;box-sizing:border-box"></div>
<div style="left:365.60px;top:672.51px;font-size:11.8px;line-height:11.8px;font-weight:bold;color:#2A2E3A;white-space:nowrap;transform:scaleX(0.9383);transform-origin:0 0;">Hold</div>
<div style="left:400px;top:671px;width:12px;height:12px;background:#4AA0F0;border:1px solid #111;box-sizing:border-box"></div>
<div style="left:414.60px;top:672.51px;font-size:11.8px;line-height:11.8px;font-weight:bold;color:#2A2E3A;white-space:nowrap;transform:scaleX(0.9509);transform-origin:0 0;">Filled</div>
<div style="left:455px;top:671px;width:12px;height:12px;background:#FFC8A0;border:1px solid #111;box-sizing:border-box"></div>
<div style="left:471.20px;top:672.51px;font-size:11.8px;line-height:11.8px;font-weight:bold;color:#2A2E3A;white-space:nowrap;transform:scaleX(0.9945);transform-origin:0 0;">Out</div>
<div style="left:500px;top:671px;width:12px;height:12px;background:#FFA050;border:1px solid #111;box-sizing:border-box"></div>
<div style="left:517.90px;top:672.51px;font-size:11.8px;line-height:11.8px;font-weight:bold;color:#2A2E3A;white-space:nowrap;transform:scaleX(0.9755);transform-origin:0 0;">Overdue</div>
<div style="left:575px;top:671px;width:12px;height:12px;background:#007000;border:1px solid #111;box-sizing:border-box"></div>
<div style="left:593.20px;top:672.51px;font-size:11.8px;line-height:11.8px;font-weight:bold;color:#2A2E3A;white-space:nowrap;transform:scaleX(0.9753);transform-origin:0 0;">Returned</div>
<div style="left:655px;top:671px;width:12px;height:12px;background:#4A80C0;border:1px solid #111;box-sizing:border-box"></div>
<div style="left:671.80px;top:672.51px;font-size:11.8px;line-height:11.8px;font-weight:bold;color:#2A2E3A;white-space:nowrap;transform:scaleX(0.9707);transform-origin:0 0;">T-Receive/Inventory PO/P-Assigned</div>
<div style="left:879px;top:671px;width:12px;height:12px;background:#C8D8A0;border:1px solid #111;box-sizing:border-box"></div>
<div style="left:896.40px;top:672.51px;font-size:11.8px;line-height:11.8px;font-weight:bold;color:#2A2E3A;white-space:nowrap;transform:scaleX(1.0167);transform-origin:0 0;">In Transfer/Transfer order/Transfer-Out</div>
<div style="left:1130px;top:671px;width:12px;height:12px;background:#70FF00;border:1px solid #111;box-sizing:border-box"></div>
<div style="left:1144.50px;top:672.51px;font-size:11.8px;line-height:11.8px;font-weight:bold;color:#2A2E3A;white-space:nowrap;transform:scaleX(0.9986);transform-origin:0 0;">Hold Asset</div>
<div style="left:14px;top:696px;width:12px;height:12px;background:#9A50D0;border:1px solid #111;box-sizing:border-box"></div>
<div style="left:33.90px;top:697.51px;font-size:11.8px;line-height:11.8px;font-weight:bold;color:#2A2E3A;white-space:nowrap;transform:scaleX(0.9854);transform-origin:0 0;">Transfer/Purchase/Sub Rent</div>
<div style="left:199px;top:696px;width:12px;height:12px;background:#8A2E2E;border:1px solid #111;box-sizing:border-box"></div>
<div style="left:216.50px;top:697.51px;font-size:11.8px;line-height:11.8px;font-weight:bold;color:#2A2E3A;white-space:nowrap;transform:scaleX(0.9593);transform-origin:0 0;">Damaged(NA)/Repair</div>
<div style="left:339px;top:696px;width:12px;height:12px;background:#FFC0D0;border:1px solid #111;box-sizing:border-box"></div>
<div style="left:356.30px;top:697.51px;font-size:11.8px;line-height:11.8px;font-weight:bold;color:#2A2E3A;white-space:nowrap;transform:scaleX(0.9904);transform-origin:0 0;">Missing</div>
<div style="left:409px;top:696px;width:12px;height:12px;background:#F06080;border:1px solid #111;box-sizing:border-box"></div>
<div style="left:427.10px;top:697.51px;font-size:11.8px;line-height:11.8px;font-weight:bold;color:#2A2E3A;white-space:nowrap;transform:scaleX(1.0078);transform-origin:0 0;">Lost</div>
<div style="left:463px;top:696px;width:12px;height:12px;background:#C8C0E8;border:1px solid #111;box-sizing:border-box"></div>
<div style="left:480.80px;top:697.51px;font-size:11.8px;line-height:11.8px;font-weight:bold;color:#2A2E3A;white-space:nowrap;transform:scaleX(0.9470);transform-origin:0 0;">Sub Rent PO/Locked</div>
<div style="left:601px;top:696px;width:12px;height:12px;background:#A0C0E8;border:1px solid #111;box-sizing:border-box"></div>
<div style="left:619.20px;top:697.51px;font-size:11.8px;line-height:11.8px;font-weight:bold;color:#2A2E3A;white-space:nowrap;transform:scaleX(0.9521);transform-origin:0 0;">S-Assigned/S-Fill/S-Out/S-Return</div>
<div style="left:806px;top:696px;width:12px;height:12px;background:#FFFFD0;border:1px solid #111;box-sizing:border-box"></div>
<div style="left:821.90px;top:697.51px;font-size:11.8px;line-height:11.8px;font-weight:bold;color:#2A2E3A;white-space:nowrap;transform:scaleX(0.9527);transform-origin:0 0;">Quote / Billing Order</div>
<div style="left:940px;top:696px;width:12px;height:12px;background:#FFC000;border:1px solid #111;box-sizing:border-box"></div>
<div style="left:957.40px;top:697.51px;font-size:11.8px;line-height:11.8px;font-weight:bold;color:#2A2E3A;white-space:nowrap;transform:scaleX(0.9311);transform-origin:0 0;">Sold</div>
<div style="left:990px;top:696px;width:12px;height:12px;background:#707070;border:1px solid #111;box-sizing:border-box"></div>
<div style="left:1009.60px;top:697.51px;font-size:11.8px;line-height:11.8px;font-weight:bold;color:#2A2E3A;white-space:nowrap;transform:scaleX(0.9954);transform-origin:0 0;">Retire</div>
<div style="left:1050px;top:696px;width:12px;height:12px;background:#FFFF00;border:1px solid #111;box-sizing:border-box"></div>
<div style="left:1069.50px;top:697.51px;font-size:11.8px;line-height:11.8px;font-weight:bold;color:#2A2E3A;white-space:nowrap;transform:scaleX(1.0150);transform-origin:0 0;">Quote Asset</div>
</body></html>
